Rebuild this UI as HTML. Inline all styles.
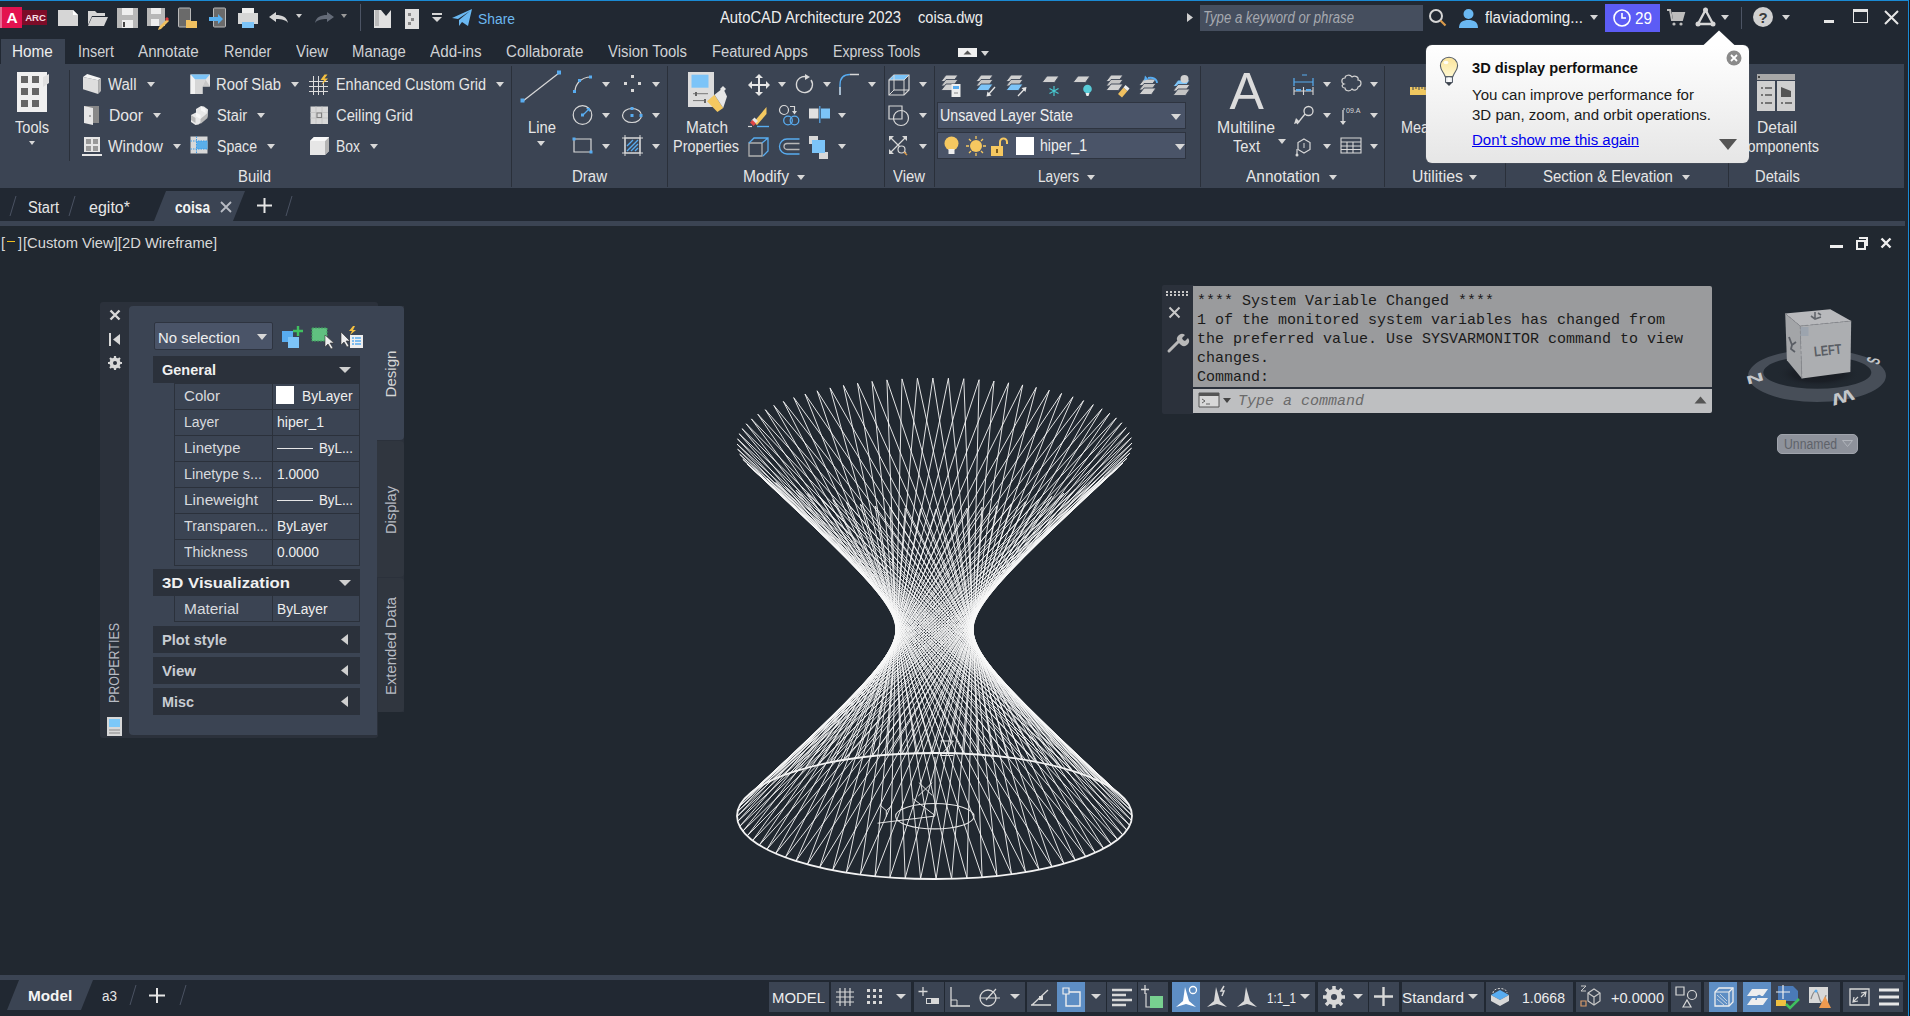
<!DOCTYPE html>
<html><head><meta charset="utf-8">
<style>
*{margin:0;padding:0;box-sizing:border-box}
html,body{width:1910px;height:1016px;overflow:hidden;background:#212830;font-family:"Liberation Sans",sans-serif;color:#e6e6e6}
.a{position:absolute}
.t{position:absolute;white-space:nowrap}
.dd{position:absolute;width:0;height:0;border-left-style:solid;border-right-style:solid;border-left-color:transparent;border-right-color:transparent}
svg{overflow:visible}
</style></head><body>

<div class="a" style="left:0px;top:0px;width:1910px;height:37px;background:#212832;"></div>
<div class="a" style="left:0px;top:37px;width:1910px;height:27px;background:#212832;"></div>
<div class="a" style="left:0px;top:64px;width:1904px;height:124px;background:#3b4453;"></div>
<div class="a" style="left:1px;top:39px;width:64px;height:25px;background:#3b4453;"></div>
<div class="a" style="left:0px;top:188px;width:1905px;height:33px;background:#212832;"></div>
<div class="a" style="left:0px;top:221px;width:1905px;height:5px;background:#3b4453;"></div>
<div class="a" style="left:0px;top:226px;width:1905px;height:749px;background:#212830;"></div>
<div class="a" style="left:0px;top:975px;width:1905px;height:5px;background:#3b4453;"></div>
<div class="a" style="left:0px;top:980px;width:1905px;height:36px;background:#212832;"></div>
<div class="a" style="left:0px;top:0px;width:1910px;height:1px;background:#1a8ad4;"></div>
<div class="a" style="left:1905px;top:1px;width:3px;height:1015px;background:#212832;"></div>
<div class="a" style="left:1908px;top:0px;width:1px;height:1016px;background:#1a8ad4;"></div>
<div class="a" style="left:1909px;top:0px;width:1px;height:1016px;background:#16191d;"></div>
<div class="a" style="left:0px;top:7px;width:2px;height:21px;background:#e86a92;"></div>
<div class="a" style="left:2px;top:7px;width:20px;height:21px;background:#e3124f;"></div>
<div class="t" style="left:6.5px;top:9.88px;font-size:15.5px;line-height:15.5px;color:#ffffff;font-family:'Liberation Sans',sans-serif;font-weight:bold;">A</div>
<div class="a" style="left:22px;top:10px;width:25px;height:15px;background:#7d0c28;"></div>
<div class="t" style="left:25.2px;top:12.87px;font-size:9.6px;line-height:9.6px;color:#f4dde3;font-family:'Liberation Sans',sans-serif;font-weight:bold;">ARC</div>
<svg class="a" style="left:57px;top:9px" width="22" height="18" viewBox="0 0 22 18"><path d="M1 1h15l5 5v11H1z" fill="#d6d6d6"/><path d="M16 1v5h5" fill="#ffffff"/></svg>
<svg class="a" style="left:87px;top:9px" width="22" height="18" viewBox="0 0 22 18"><path d="M1 2h7l2 2h8v3H5L1 16z" fill="#d6d6d6"/><path d="M5 8h16l-4 9H1z" fill="#d6d6d6"/></svg>
<svg class="a" style="left:117px;top:7px" width="22" height="22" viewBox="0 0 22 22"><path d="M0 1h21v20H0z" fill="#b8b8b8"/><path d="M5 1h11v7H5z" fill="#eeeeee"/><path d="M5 13h11v8H5z" fill="#eeeeee"/><path d="M6 15h2v5H6z" fill="#444"/></svg>
<svg class="a" style="left:147px;top:7px" width="22" height="22" viewBox="0 0 22 22"><path d="M0 1h18v18H0z" fill="#b8b8b8"/><path d="M4 1h10v6H4z" fill="#eeeeee"/><path d="M4 12h8v7H4z" fill="#eeeeee"/><path d="M12 20l8-8 2 2-8 8-3 1z" fill="#f0c060"/><path d="M18 12l2-2 2 2-2 2z" fill="#e04040"/></svg>
<svg class="a" style="left:178px;top:7px" width="20" height="22" viewBox="0 0 20 22"><rect x="0.5" y="1" width="12" height="19" rx="1" fill="#6a6a6a" stroke="#b8b8b8"/><path d="M8 13h4l1 1h6v7H8z" fill="#f0c060"/></svg>
<svg class="a" style="left:208px;top:7px" width="20" height="22" viewBox="0 0 20 22"><rect x="5.5" y="1" width="12" height="19" rx="1" fill="#6a6a6a" stroke="#b8b8b8"/><path d="M1 10h9v-3l5 5-5 5v-3H1z" fill="#58b0f0"/></svg>
<svg class="a" style="left:237px;top:7px" width="22" height="22" viewBox="0 0 22 22"><path d="M5 1h12v5H5z" fill="#eeeeee"/><path d="M1 6h20v11H1z" fill="#d6d6d6"/><path d="M5 15h12v6H5z" fill="#7cc4f8"/></svg>
<svg class="a" style="left:268px;top:11px" width="22" height="14" viewBox="0 0 22 14"><path d="M1 6l7-5v3c6 0 11 2 12 8-2-3-6-4-12-4v3z" fill="#d6d6d6"/></svg>
<div class="dd" style="left:296.0px;top:14px;border-left-width:3.5px;border-right-width:3.5px;border-top:4px solid #cfcfcf"></div>
<svg class="a" style="left:313px;top:11px" width="22" height="14" viewBox="0 0 22 14"><path d="M21 6l-7-5v3c-6 0-11 2-12 8 2-3 6-4 12-4v3z" fill="#646b78"/></svg>
<div class="dd" style="left:341.0px;top:14px;border-left-width:3.5px;border-right-width:3.5px;border-top:4px solid #9a9a9a"></div>
<div class="a" style="left:360px;top:4px;width:1px;height:27px;background:#4c5464;"></div>
<svg class="a" style="left:373px;top:9px" width="20" height="19" viewBox="0 0 20 19"><path d="M1 1l7 0 5 6 5-6v18H1z" fill="#e0e0e0"/><path d="M2 1h4v16H2z" fill="#bbb"/></svg>
<svg class="a" style="left:404px;top:8px" width="16" height="21" viewBox="0 0 16 21"><path d="M1 1h14v20H1z" fill="#e0e0e0"/><path d="M4 5h3v3H4zM7 10h3v3H7zM4 14h3v3H4z" fill="#888"/></svg>
<div class="a" style="left:432px;top:13px;width:10px;height:2px;background:#d6d6d6;"></div>
<div class="dd" style="left:432.0px;top:17px;border-left-width:5.0px;border-right-width:5.0px;border-top:5px solid #d6d6d6"></div>
<svg class="a" style="left:452px;top:9px" width="21" height="18" viewBox="0 0 21 18"><path d="M0 9L20 0l-4 17-6-4-3 4 0-6 11-9-12 8z" fill="#6ab8f2"/></svg>
<div class="t" style="left:478px;top:11.26px;font-size:15.4px;line-height:15.4px;color:#6cb8f0;font-family:'Liberation Sans',sans-serif;transform:scaleX(0.9004);transform-origin:0 0;">Share</div>
<div class="t" style="left:720px;top:9.99px;font-size:15.6px;line-height:15.6px;color:#eeeeee;font-family:'Liberation Sans',sans-serif;transform:scaleX(0.9488);transform-origin:0 0;">AutoCAD Architecture 2023</div>
<div class="t" style="left:918px;top:9.99px;font-size:15.6px;line-height:15.6px;color:#eeeeee;font-family:'Liberation Sans',sans-serif;transform:scaleX(0.9371);transform-origin:0 0;">coisa.dwg</div>
<svg class="a" style="left:1186px;top:12px" width="8" height="11" viewBox="0 0 8 11"><path d="M1 1l6 4.5-6 4.5z" fill="#d0d0d0"/></svg>
<div class="a" style="left:1200px;top:5px;width:223px;height:26px;background:#454e5e;"></div>
<div class="t" style="left:1203px;top:9.79px;font-size:15.6px;line-height:15.6px;color:#a6a9b0;font-family:'Liberation Sans',sans-serif;transform:scaleX(0.8427);transform-origin:0 0;font-style:italic;">Type a keyword or phrase</div>
<svg class="a" style="left:1428px;top:8px" width="20" height="20" viewBox="0 0 20 20"><circle cx="8" cy="8" r="6" fill="none" stroke="#d6d6d6" stroke-width="2"/><path d="M12.5 12.5l5 5" stroke="#d99a4a" stroke-width="2.2"/></svg>
<svg class="a" style="left:1458px;top:8px" width="21" height="20" viewBox="0 0 21 20"><circle cx="10.5" cy="6" r="5" fill="#6ab8f2"/><path d="M1 20c0-6 4-8 9.5-8s9.5 2 9.5 8z" fill="#6ab8f2"/></svg>
<div class="t" style="left:1485px;top:10.29px;font-size:15.6px;line-height:15.6px;color:#eeeeee;font-family:'Liberation Sans',sans-serif;transform:scaleX(0.9744);transform-origin:0 0;">flaviadoming...</div>
<div class="dd" style="left:1590.0px;top:15px;border-left-width:4.0px;border-right-width:4.0px;border-top:5px solid #d6d6d6"></div>
<div class="a" style="left:1605px;top:4px;width:55px;height:28px;background:#5c5cf5;"></div>
<svg class="a" style="left:1612px;top:8px" width="20" height="20" viewBox="0 0 20 20"><circle cx="10" cy="10" r="8" fill="none" stroke="#ffffff" stroke-width="1.6"/><path d="M10 5v5h4" fill="none" stroke="#ffffff" stroke-width="1.6"/></svg>
<div class="t" style="left:1635px;top:10.79px;font-size:15.6px;line-height:15.6px;color:#ffffff;font-family:'Liberation Sans',sans-serif;transform:scaleX(0.9798);transform-origin:0 0;">29</div>
<svg class="a" style="left:1667px;top:9px" width="18" height="18" viewBox="0 0 18 18"><path d="M0 1h3l2 10h10l2-7H5" fill="none" stroke="#bdbdbd" stroke-width="2"/><circle cx="7" cy="15" r="1.6" fill="#bdbdbd"/><circle cx="14" cy="15" r="1.6" fill="#bdbdbd"/><path d="M5 5h12l-2 6H6z" fill="#bdbdbd"/></svg>
<svg class="a" style="left:1695px;top:7px" width="21" height="20" viewBox="0 0 21 20"><path d="M10.5 3L3 17h15z" fill="none" stroke="#d6d6d6" stroke-width="2.4"/><circle cx="10.5" cy="3" r="2.5" fill="#d6d6d6"/><circle cx="3" cy="17" r="2.5" fill="#d6d6d6"/><circle cx="18" cy="17" r="2.5" fill="#d6d6d6"/></svg>
<div class="dd" style="left:1721.0px;top:15px;border-left-width:4.0px;border-right-width:4.0px;border-top:5px solid #d6d6d6"></div>
<div class="a" style="left:1741px;top:7px;width:1px;height:22px;background:#4c5464;"></div>
<svg class="a" style="left:1753px;top:7px" width="21" height="21" viewBox="0 0 21 21"><circle cx="10" cy="10" r="10" fill="#d0d0d0"/><text x="10" y="15.5" font-family="Liberation Sans" font-size="15" text-anchor="middle" fill="#3a3a3a" font-weight="bold">?</text></svg>
<div class="dd" style="left:1782.0px;top:15px;border-left-width:4.0px;border-right-width:4.0px;border-top:5px solid #d6d6d6"></div>
<div class="a" style="left:1824px;top:20px;width:10px;height:3px;background:#e6e6e6;"></div>
<div class="a" style="left:1853px;top:9px;width:15px;height:14px;background:transparent;border:1.5px solid #e6e6e6;border-top-width:3px"></div>
<svg class="a" style="left:1884px;top:10px" width="15" height="15" viewBox="0 0 15 15"><path d="M1 1l13 13M14 1L1 14" stroke="#e6e6e6" stroke-width="2"/></svg>
<div class="t" style="left:12.3px;top:43.99px;font-size:15.6px;line-height:15.6px;color:#eeeeee;font-family:'Liberation Sans',sans-serif;transform:scaleX(0.9805);transform-origin:0 0;">Home</div>
<div class="t" style="left:78px;top:43.99px;font-size:15.6px;line-height:15.6px;color:#cfd1d5;font-family:'Liberation Sans',sans-serif;transform:scaleX(0.9202);transform-origin:0 0;">Insert</div>
<div class="t" style="left:138.2px;top:43.99px;font-size:15.6px;line-height:15.6px;color:#cfd1d5;font-family:'Liberation Sans',sans-serif;transform:scaleX(0.9736);transform-origin:0 0;">Annotate</div>
<div class="t" style="left:223.8px;top:43.99px;font-size:15.6px;line-height:15.6px;color:#cfd1d5;font-family:'Liberation Sans',sans-serif;transform:scaleX(0.9226);transform-origin:0 0;">Render</div>
<div class="t" style="left:295.8px;top:43.99px;font-size:15.6px;line-height:15.6px;color:#cfd1d5;font-family:'Liberation Sans',sans-serif;transform:scaleX(0.9603);transform-origin:0 0;">View</div>
<div class="t" style="left:352px;top:43.99px;font-size:15.6px;line-height:15.6px;color:#cfd1d5;font-family:'Liberation Sans',sans-serif;transform:scaleX(0.9544);transform-origin:0 0;">Manage</div>
<div class="t" style="left:430px;top:43.99px;font-size:15.6px;line-height:15.6px;color:#cfd1d5;font-family:'Liberation Sans',sans-serif;transform:scaleX(0.9775);transform-origin:0 0;">Add-ins</div>
<div class="t" style="left:506px;top:43.99px;font-size:15.6px;line-height:15.6px;color:#cfd1d5;font-family:'Liberation Sans',sans-serif;transform:scaleX(0.9715);transform-origin:0 0;">Collaborate</div>
<div class="t" style="left:608px;top:43.99px;font-size:15.6px;line-height:15.6px;color:#cfd1d5;font-family:'Liberation Sans',sans-serif;transform:scaleX(0.9556);transform-origin:0 0;">Vision Tools</div>
<div class="t" style="left:712px;top:43.99px;font-size:15.6px;line-height:15.6px;color:#cfd1d5;font-family:'Liberation Sans',sans-serif;transform:scaleX(0.9442);transform-origin:0 0;">Featured Apps</div>
<div class="t" style="left:832.6px;top:43.99px;font-size:15.6px;line-height:15.6px;color:#cfd1d5;font-family:'Liberation Sans',sans-serif;transform:scaleX(0.9027);transform-origin:0 0;">Express Tools</div>
<div class="a" style="left:958px;top:48px;width:19px;height:9px;background:#f0f0f0;"></div>
<svg class="a" style="left:963px;top:50px" width="9" height="5" viewBox="0 0 9 5"><path d="M0.5 4.5l4-4 4 4z" fill="#555"/></svg>
<div class="dd" style="left:981.0px;top:51px;border-left-width:4.0px;border-right-width:4.0px;border-top:5px solid #d6d6d6"></div>
<div class="a" style="left:511px;top:66px;width:1px;height:121px;background:#2a303a;"></div>
<div class="a" style="left:667px;top:66px;width:1px;height:121px;background:#2a303a;"></div>
<div class="a" style="left:884px;top:66px;width:1px;height:121px;background:#2a303a;"></div>
<div class="a" style="left:934px;top:66px;width:1px;height:121px;background:#2a303a;"></div>
<div class="a" style="left:1200px;top:66px;width:1px;height:121px;background:#2a303a;"></div>
<div class="a" style="left:1384px;top:66px;width:1px;height:121px;background:#2a303a;"></div>
<div class="a" style="left:1505px;top:66px;width:1px;height:121px;background:#2a303a;"></div>
<div class="a" style="left:1728px;top:66px;width:1px;height:121px;background:#2a303a;"></div>
<div class="a" style="left:69px;top:70px;width:1px;height:91px;background:#2a303a;"></div>
<svg class="a" style="left:16px;top:71px" width="34" height="42" viewBox="0 0 34 42"><path d="M1 1h26l4 0v40H1z" fill="#f0f0f0"/><path d="M27 6l6-3v9l-6 4z" fill="#e0e0e0"/><path d="M5 5h7v7H5zM16 5h7v7h-7zM5 17h7v7H5zM16 17h7v7h-7zM5 29h7v7H5zM16 29h7v7h-7z" fill="#666"/></svg>
<div class="t" style="left:15px;top:120.09px;font-size:15.6px;line-height:15.6px;color:#e6e6e6;font-family:'Liberation Sans',sans-serif;transform:scaleX(0.9336);transform-origin:0 0;">Tools</div>
<div class="dd" style="left:28.700000000000003px;top:141px;border-left-width:3.5px;border-right-width:3.5px;border-top:4px solid #d8d8d8"></div>
<svg class="a" style="left:80px;top:72px" width="24" height="24" viewBox="0 0 24 24"><path d="M3 4.9L18.1 8.2V21.9L3 17.2z" fill="#dedede"/><path d="M3 4.9L7.2 2 21 6.3 18.1 8.2z" fill="#f4f4f4"/><path d="M18.1 8.2L21 6.3V19L18.1 21.9z" fill="#b4b4b4"/></svg>
<div class="t" style="left:108px;top:76.79px;font-size:15.6px;line-height:15.6px;color:#e6e6e6;font-family:'Liberation Sans',sans-serif;transform:scaleX(0.9578);transform-origin:0 0;">Wall</div>
<div class="dd" style="left:147.0px;top:81.5px;border-left-width:4.0px;border-right-width:4.0px;border-top:5px solid #d8d8d8"></div>
<svg class="a" style="left:83px;top:105px" width="17" height="21" viewBox="0 0 17 21"><path d="M1 1h15v17H1z" fill="#888"/><path d="M1 1l9 2v17l-9-2z" fill="#e6e6e6"/><circle cx="7" cy="11" r="0.8" fill="#555"/></svg>
<div class="t" style="left:109px;top:107.79px;font-size:15.6px;line-height:15.6px;color:#e6e6e6;font-family:'Liberation Sans',sans-serif;transform:scaleX(1.0056);transform-origin:0 0;">Door</div>
<div class="dd" style="left:153.0px;top:112.5px;border-left-width:4.0px;border-right-width:4.0px;border-top:5px solid #d8d8d8"></div>
<svg class="a" style="left:82px;top:136px" width="21" height="22" viewBox="0 0 21 22"><path d="M2 1h16v15H2z" fill="#e6e6e6"/><path d="M4 3h5v5H4zM11 3h5v5h-5zM4 10h5v5H4zM11 10h5v5h-5z" fill="#999"/><path d="M0 18h20v2H0z" fill="#e6e6e6"/></svg>
<div class="t" style="left:108px;top:138.79px;font-size:15.6px;line-height:15.6px;color:#e6e6e6;font-family:'Liberation Sans',sans-serif;transform:scaleX(0.9913);transform-origin:0 0;">Window</div>
<div class="dd" style="left:173.0px;top:143.5px;border-left-width:4.0px;border-right-width:4.0px;border-top:5px solid #d8d8d8"></div>
<svg class="a" style="left:190px;top:74px" width="21" height="21" viewBox="0 0 21 21"><path d="M0.5 0.5h19.5v12h-7.5v7.5H0.5z" fill="#e4e4e4"/><path d="M0.5 0.5h19.5l-4.5 5H5z" fill="#7cc4f8"/><path d="M15.5 5.5l4.5 7h-7.5z" fill="#c8c8c8"/><path d="M0.5 0.5L5 5.5v14.5H0.5z" fill="#f2f2f2"/><path d="M5 5.5h10.5l-3 7v7.5H5z" fill="#d6d6d6"/></svg>
<div class="t" style="left:216px;top:76.79px;font-size:15.6px;line-height:15.6px;color:#e6e6e6;font-family:'Liberation Sans',sans-serif;transform:scaleX(0.9488);transform-origin:0 0;">Roof Slab</div>
<div class="dd" style="left:291.0px;top:81.5px;border-left-width:4.0px;border-right-width:4.0px;border-top:5px solid #d8d8d8"></div>
<svg class="a" style="left:190px;top:105px" width="19" height="20" viewBox="0 0 19 20"><path d="M1 10l5-2.5 0-3.5 5-3 3 0.5 4 3 -0.5 7-5 5-4 3-3 .5-4.5-3z" fill="#e8e8e8"/><path d="M6 7.5l4.5 2.5v4l-4.5-2.5zM11 1.5l4.5 2.5v4l-4.5-2.5z" fill="#f6f6f6"/><path d="M1 10l0 5 4.5 3v-5zM10.5 14v5l7-6v-5z" fill="#b8b8b8"/></svg>
<div class="t" style="left:217px;top:107.79px;font-size:15.6px;line-height:15.6px;color:#e6e6e6;font-family:'Liberation Sans',sans-serif;transform:scaleX(0.9353);transform-origin:0 0;">Stair</div>
<div class="dd" style="left:257.0px;top:112.5px;border-left-width:4.0px;border-right-width:4.0px;border-top:5px solid #d8d8d8"></div>
<svg class="a" style="left:190px;top:136px" width="18" height="19" viewBox="0 0 18 19"><path d="M0.5 0.5h17v17H0.5z" fill="#d8d8d8"/><path d="M6.5 5h11v8h-11z" fill="#5aaeea"/><path d="M0.5 5h17M0.5 13h17M6.5 0.5v17" stroke="#3a9ae8" stroke-width="1" stroke-dasharray="1.5 1" fill="none"/></svg>
<div class="t" style="left:217px;top:138.79px;font-size:15.6px;line-height:15.6px;color:#e6e6e6;font-family:'Liberation Sans',sans-serif;transform:scaleX(0.9043);transform-origin:0 0;">Space</div>
<div class="dd" style="left:267.0px;top:143.5px;border-left-width:4.0px;border-right-width:4.0px;border-top:5px solid #d8d8d8"></div>
<svg class="a" style="left:309px;top:74px" width="21" height="21" viewBox="0 0 21 21"><path d="M4.5 2v19M9.5 2v19M14.5 8v13M0 7.5h19M0 12.5h19M0 17.5h19" stroke="#dcdcdc" stroke-width="1" fill="none"/><path d="M15.5 0.5l-4 5.5h3.5l-2.5 5 6.5-6.5h-3.5l3-4z" fill="#f4c040"/></svg>
<div class="t" style="left:336px;top:76.79px;font-size:15.6px;line-height:15.6px;color:#e6e6e6;font-family:'Liberation Sans',sans-serif;transform:scaleX(0.9251);transform-origin:0 0;">Enhanced Custom Grid</div>
<div class="dd" style="left:496.0px;top:81.5px;border-left-width:4.0px;border-right-width:4.0px;border-top:5px solid #d8d8d8"></div>
<svg class="a" style="left:310px;top:106px" width="19" height="19" viewBox="0 0 19 19"><path d="M0.5 0.5h17.5v17.5H0.5z" fill="#d8d8d8"/><path d="M0.5 6.5h17.5M0.5 12h17.5M6 0.5v17.5M12 0.5v17.5" stroke="#c4c4c4" stroke-width="1"/><path d="M7 7h4.5v4.5H7z" fill="none" stroke="#808080" stroke-width="1.1"/></svg>
<div class="t" style="left:336px;top:107.79px;font-size:15.6px;line-height:15.6px;color:#e6e6e6;font-family:'Liberation Sans',sans-serif;transform:scaleX(0.9449);transform-origin:0 0;">Ceiling Grid</div>
<svg class="a" style="left:309px;top:136px" width="21" height="20" viewBox="0 0 21 20"><path d="M1 5l4-4h15v14l-4 4H1z" fill="#e6e6e6"/><path d="M16 5l4-4v14l-4 4z" fill="#b4b4b4"/><path d="M1 5l4-4h15l-4 4z" fill="#f8f8f8"/></svg>
<div class="t" style="left:336px;top:138.79px;font-size:15.6px;line-height:15.6px;color:#e6e6e6;font-family:'Liberation Sans',sans-serif;transform:scaleX(0.8928);transform-origin:0 0;">Box</div>
<div class="dd" style="left:370.0px;top:143.5px;border-left-width:4.0px;border-right-width:4.0px;border-top:5px solid #d8d8d8"></div>
<div class="t" style="left:238px;top:168.79px;font-size:15.6px;line-height:15.6px;color:#e6e6e6;font-family:'Liberation Sans',sans-serif;transform:scaleX(0.9513);transform-origin:0 0;">Build</div>
<svg class="a" style="left:520px;top:70px" width="42" height="34" viewBox="0 0 42 34"><path d="M3 31L39 3" stroke="#d8d8d8" stroke-width="1.2"/><rect x="0.5" y="28.5" width="4" height="4" fill="#58acf0"/><rect x="37" y="0.5" width="4" height="4" fill="#58acf0"/></svg>
<div class="t" style="left:528px;top:119.79px;font-size:15.6px;line-height:15.6px;color:#e6e6e6;font-family:'Liberation Sans',sans-serif;transform:scaleX(0.9494);transform-origin:0 0;">Line</div>
<div class="dd" style="left:537.0px;top:141px;border-left-width:4.0px;border-right-width:4.0px;border-top:5px solid #d8d8d8"></div>
<svg class="a" style="left:572px;top:74px" width="22" height="20" viewBox="0 0 22 20"><path d="M3 18c0-8 6-15 16-15" fill="none" stroke="#d8d8d8" stroke-width="1.2"/><rect x="1" y="16" width="3" height="3" fill="#58acf0"/><rect x="6" y="5" width="3" height="3" fill="#58acf0"/><rect x="17" y="1.5" width="3" height="3" fill="#58acf0"/></svg>
<div class="dd" style="left:602.0px;top:81.5px;border-left-width:4.0px;border-right-width:4.0px;border-top:5px solid #d8d8d8"></div>
<svg class="a" style="left:623px;top:74px" width="20" height="20" viewBox="0 0 20 20"><path d="M8 1h3v3H8zM1 8h3v3H1zM15 8h3v3h-3zM8 15h3v3H8z" fill="#d8d8d8"/></svg>
<div class="dd" style="left:652.0px;top:81.5px;border-left-width:4.0px;border-right-width:4.0px;border-top:5px solid #d8d8d8"></div>
<svg class="a" style="left:572px;top:104px" width="22" height="22" viewBox="0 0 22 22"><circle cx="10.5" cy="11" r="9.3" fill="none" stroke="#d8d8d8" stroke-width="1.2"/><rect x="9" y="9.5" width="3" height="3" fill="#58acf0"/><path d="M11 11l6-6" stroke="#58acf0" stroke-width="1.2"/><path d="M14 4h4v4z" fill="#58acf0"/></svg>
<div class="dd" style="left:602.0px;top:112.5px;border-left-width:4.0px;border-right-width:4.0px;border-top:5px solid #d8d8d8"></div>
<svg class="a" style="left:621px;top:106px" width="23" height="18" viewBox="0 0 23 18"><ellipse cx="11" cy="9.5" rx="9.5" ry="7" fill="none" stroke="#d8d8d8" stroke-width="1.2"/><rect x="9.5" y="1" width="3" height="3" fill="#58acf0"/><rect x="9.5" y="8" width="3" height="3" fill="#58acf0"/><rect x="18.5" y="8" width="3" height="3" fill="#58acf0"/></svg>
<div class="dd" style="left:652.0px;top:112.5px;border-left-width:4.0px;border-right-width:4.0px;border-top:5px solid #d8d8d8"></div>
<svg class="a" style="left:572px;top:137px" width="22" height="18" viewBox="0 0 22 18"><path d="M2 2h17v13H2z" fill="none" stroke="#d8d8d8" stroke-width="1.2"/><rect x="0.5" y="0.5" width="3" height="3" fill="#58acf0"/><rect x="17.5" y="13.5" width="3" height="3" fill="#58acf0"/></svg>
<div class="dd" style="left:602.0px;top:143.5px;border-left-width:4.0px;border-right-width:4.0px;border-top:5px solid #d8d8d8"></div>
<svg class="a" style="left:622px;top:135px" width="22" height="22" viewBox="0 0 22 22"><path d="M3 3h15v15H3z" fill="none" stroke="#d8d8d8" stroke-width="1.2"/><path d="M3 0v21M18 0v21M0 3h21M0 18h21" stroke="#d8d8d8" stroke-width="1"/><path d="M5 11l6-6M5 16l11-11M9 16l7-7M13 16l3-3" stroke="#58acf0" stroke-width="1.4"/></svg>
<div class="dd" style="left:652.0px;top:143.5px;border-left-width:4.0px;border-right-width:4.0px;border-top:5px solid #d8d8d8"></div>
<div class="t" style="left:572px;top:168.79px;font-size:15.6px;line-height:15.6px;color:#e6e6e6;font-family:'Liberation Sans',sans-serif;transform:scaleX(0.9615);transform-origin:0 0;">Draw</div>
<svg class="a" style="left:686px;top:70px" width="44" height="44" viewBox="0 0 44 44"><path d="M2 2h26v35H2z" fill="#dcdcdc"/><path d="M5.5 4.7h17v13h-17z" fill="#7cc4f8"/><path d="M7 23.7h15M7 30.6h12" stroke="#777" stroke-width="1"/><path d="M9 22h2v4H9zM18 29h2v4h-2z" fill="#666"/><path d="M21 31.2l7.5-6.4 8.7 13.3-5.8 4z" fill="#f4c860"/><path d="M28.5 24.8l8.5-6.8 4 8.6-3.8 11.5z" fill="#e6e6e6"/><path d="M34 19l3-3 3 3-3 3z" fill="#e6e6e6"/></svg>
<div class="t" style="left:686px;top:119.79px;font-size:15.6px;line-height:15.6px;color:#e6e6e6;font-family:'Liberation Sans',sans-serif;transform:scaleX(0.9887);transform-origin:0 0;">Match</div>
<div class="t" style="left:673px;top:138.79px;font-size:15.6px;line-height:15.6px;color:#e6e6e6;font-family:'Liberation Sans',sans-serif;transform:scaleX(0.9283);transform-origin:0 0;">Properties</div>
<svg class="a" style="left:748px;top:74px" width="22" height="22" viewBox="0 0 22 22"><path d="M11 1v20M1 11h20" stroke="#e6e6e6" stroke-width="2"/><path d="M11 0l-4 4h8zM11 22l-4-4h8zM0 11l4-4v8zM22 11l-4-4v8z" fill="#e6e6e6"/></svg>
<div class="dd" style="left:778.0px;top:81.5px;border-left-width:4.0px;border-right-width:4.0px;border-top:5px solid #d8d8d8"></div>
<svg class="a" style="left:794px;top:74px" width="22" height="22" viewBox="0 0 22 22"><path d="M17 6a8 8 0 1 1-4-3" fill="none" stroke="#d8d8d8" stroke-width="1.4"/><path d="M11 0l5 3-5 3z" fill="#d8d8d8"/></svg>
<div class="dd" style="left:823.0px;top:81.5px;border-left-width:4.0px;border-right-width:4.0px;border-top:5px solid #d8d8d8"></div>
<svg class="a" style="left:838px;top:73px" width="22" height="22" viewBox="0 0 22 22"><path d="M2 22V12C2 5 6 1.5 12 1.5" fill="none" stroke="#58acf0" stroke-width="1.3"/><path d="M2 22V14M12 1.5h9" fill="none" stroke="#d8d8d8" stroke-width="1.3"/></svg>
<div class="dd" style="left:868.0px;top:81.5px;border-left-width:4.0px;border-right-width:4.0px;border-top:5px solid #d8d8d8"></div>
<svg class="a" style="left:748px;top:104px" width="22" height="22" viewBox="0 0 22 22"><path d="M5.5 18.5L18.5 3v7L9 21z" fill="#f4c860"/><path d="M3.5 16.5l3-3 3.5 3.5-3 3z" fill="#e6e6e6"/><path d="M2 18.5l2.5-2.5 3.5 3.5-2.5 2.5z" fill="#e04545"/><path d="M0 22.5h4" stroke="#d8d8d8" stroke-width="1.2"/><path d="M9 22.5h12" stroke="#58acf0" stroke-width="1.4"/></svg>
<svg class="a" style="left:778px;top:104px" width="22" height="22" viewBox="0 0 22 22"><circle cx="6" cy="6" r="4.5" fill="none" stroke="#d8d8d8" stroke-width="1.2"/><circle cx="10" cy="16.5" r="4.3" fill="none" stroke="#58acf0" stroke-width="1.3"/><circle cx="16.5" cy="16.5" r="4.3" fill="none" stroke="#58acf0" stroke-width="1.3"/><path d="M12 2.5h4.5v6" fill="none" stroke="#d8d8d8" stroke-width="1.2"/><path d="M14 7l2.5 3.5 2.5-3.5z" fill="#d8d8d8"/></svg>
<svg class="a" style="left:808px;top:106px" width="24" height="18" viewBox="0 0 24 18"><path d="M1 2.5h9.5v10H1z" fill="#e0e0e0"/><path d="M13 2.5h9v10h-9z" fill="#7cc4f8"/><path d="M11.8 0v17" stroke="#58acf0" stroke-width="1.2"/></svg>
<div class="dd" style="left:838.0px;top:112.5px;border-left-width:4.0px;border-right-width:4.0px;border-top:5px solid #d8d8d8"></div>
<svg class="a" style="left:748px;top:136px" width="22" height="22" viewBox="0 0 22 22"><path d="M1 7h13v13H1z" fill="none" stroke="#b0b0b0" stroke-width="1.3"/><path d="M1 7l5-5h14v13l-5 5M14 7l6-5" fill="none" stroke="#58acf0" stroke-width="1.3"/></svg>
<svg class="a" style="left:778px;top:137px" width="24" height="20" viewBox="0 0 24 20"><path d="M21.5 2H9a7.5 7.5 0 0 0 0 15h12.5" fill="none" stroke="#58acf0" stroke-width="1.3"/><path d="M21.5 6.5H9a3 3 0 0 0 0 6h12.5" fill="none" stroke="#b8b8b8" stroke-width="1.3"/></svg>
<svg class="a" style="left:808px;top:135px" width="24" height="24" viewBox="0 0 24 24"><path d="M1 1h9v8H1z" fill="#d8d8d8"/><path d="M11 17h9v7h-9z" fill="#d8d8d8"/><path d="M4 5h13v13H4z" fill="#7cc4f8"/></svg>
<div class="dd" style="left:838.0px;top:143.5px;border-left-width:4.0px;border-right-width:4.0px;border-top:5px solid #d8d8d8"></div>
<div class="t" style="left:743px;top:168.79px;font-size:15.6px;line-height:15.6px;color:#e6e6e6;font-family:'Liberation Sans',sans-serif;">Modify</div>
<div class="dd" style="left:797.0px;top:174.5px;border-left-width:4.0px;border-right-width:4.0px;border-top:5px solid #d8d8d8"></div>
<svg class="a" style="left:888px;top:74px" width="22" height="22" viewBox="0 0 22 22"><path d="M1 6l5-5h15v15l-5 5H1z" fill="none" stroke="#d8d8d8" stroke-width="1.2"/><path d="M1 6l5-5h15l-5 5z" fill="#7cc4f8"/><path d="M1 6h15v15M16 6l5-5M1 21l5-5h15M6 1v15" fill="none" stroke="#d8d8d8" stroke-width="1"/></svg>
<div class="dd" style="left:919.0px;top:81.5px;border-left-width:4.0px;border-right-width:4.0px;border-top:5px solid #d8d8d8"></div>
<svg class="a" style="left:888px;top:105px" width="22" height="22" viewBox="0 0 22 22"><path d="M1 1h13v13H1z" fill="none" stroke="#d8d8d8" stroke-width="1.2"/><circle cx="13" cy="13" r="7.5" fill="none" stroke="#d8d8d8" stroke-width="1.2"/></svg>
<div class="dd" style="left:919.0px;top:112.5px;border-left-width:4.0px;border-right-width:4.0px;border-top:5px solid #d8d8d8"></div>
<svg class="a" style="left:888px;top:135px" width="22" height="22" viewBox="0 0 22 22"><path d="M2 2l16 16M18 2L2 18" stroke="#d8d8d8" stroke-width="1.2"/><path d="M1 1h5L1 6zM19 1h-5l5 5zM1 19v-5l5 5z" fill="#d8d8d8"/><circle cx="13.5" cy="14.5" r="3.5" fill="#3b4453" stroke="#d8d8d8" stroke-width="1.2"/><path d="M16 17l3 3" stroke="#d99a4a" stroke-width="1.5"/></svg>
<div class="dd" style="left:919.0px;top:143.5px;border-left-width:4.0px;border-right-width:4.0px;border-top:5px solid #d8d8d8"></div>
<div class="t" style="left:893px;top:168.79px;font-size:15.6px;line-height:15.6px;color:#e6e6e6;font-family:'Liberation Sans',sans-serif;transform:scaleX(0.9544);transform-origin:0 0;">View</div>
<svg class="a" style="left:941px;top:74px" width="24" height="24" viewBox="0 0 24 24"><path d="M5 1.0h12l-4.5 6.5H0z" fill="#d0d0d0" stroke="#3b4453" stroke-width="0.9"/><path d="M5 5.5h12l-4.5 6.5H0z" fill="#c4c4c4" stroke="#3b4453" stroke-width="0.9"/><path d="M5 10.0h12l-4.5 6.5H0z" fill="#d0d0d0" stroke="#3b4453" stroke-width="0.9"/><path d="M10.5 10h9v13h-9z" fill="#eeeeee"/><path d="M12 12h6v3h-6z" fill="#58acf0"/><path d="M13 19h4" stroke="#888"/></svg>
<svg class="a" style="left:976px;top:74px" width="24" height="24" viewBox="0 0 24 24"><path d="M5 1.0h12l-4.5 6.5H0z" fill="#d0d0d0" stroke="#3b4453" stroke-width="0.9"/><path d="M5 5.5h12l-4.5 6.5H0z" fill="#c4c4c4" stroke="#3b4453" stroke-width="0.9"/><path d="M5 10.0h12l-4.5 6.5H0z" fill="#7cc4f8" stroke="#3b4453" stroke-width="0.9"/><path d="M19 13l-7 8" stroke="#e6e6e6" stroke-width="1.3"/><path d="M10.5 22.5l1-5 4 4z" fill="#e6e6e6"/></svg>
<svg class="a" style="left:1006px;top:74px" width="24" height="24" viewBox="0 0 24 24"><path d="M5 1.0h12l-4.5 6.5H0z" fill="#d0d0d0" stroke="#3b4453" stroke-width="0.9"/><path d="M5 5.5h12l-4.5 6.5H0z" fill="#c4c4c4" stroke="#3b4453" stroke-width="0.9"/><path d="M5 10.0h12l-4.5 6.5H0z" fill="#7cc4f8" stroke="#3b4453" stroke-width="0.9"/><path d="M12 22l7-7.5" stroke="#e6e6e6" stroke-width="1.3"/><path d="M20.5 13l-1 5-4-4z" fill="#e6e6e6"/></svg>
<svg class="a" style="left:1040px;top:74px" width="24" height="24" viewBox="0 0 24 24"><path d="M7 2.0h12l-4.5 6.5H2z" fill="#d0d0d0" stroke="#3b4453" stroke-width="0.9"/><path d="M14 12v10M9.5 14.5l9 5M9.5 19.5l9-5" stroke="#48c8d0" stroke-width="1.2"/></svg>
<svg class="a" style="left:1071px;top:74px" width="24" height="24" viewBox="0 0 24 24"><path d="M7 2.0h12l-4.5 6.5H2z" fill="#d0d0d0" stroke="#3b4453" stroke-width="0.9"/><circle cx="16.5" cy="15" r="4.3" fill="#58ccd8"/><path d="M14.5 19h4l-1 3h-2z" fill="#eeeeee"/></svg>
<svg class="a" style="left:1106px;top:74px" width="24" height="24" viewBox="0 0 24 24"><path d="M5 1.0h12l-4.5 6.5H0z" fill="#d0d0d0" stroke="#3b4453" stroke-width="0.9"/><path d="M5 5.5h12l-4.5 6.5H0z" fill="#c4c4c4" stroke="#3b4453" stroke-width="0.9"/><path d="M5 10.0h12l-4.5 6.5H0z" fill="#d0d0d0" stroke="#3b4453" stroke-width="0.9"/><path d="M12 20l5.5-6.5 4 3.5-5.5 6.5z" fill="#f0c060"/><path d="M17.5 13.5l2-2.5 4 3.5-2 2.5z" fill="#eeeeee"/></svg>
<svg class="a" style="left:1137px;top:74px" width="24" height="24" viewBox="0 0 24 24"><path d="M7 5.0h12l-4.5 6.5H2z" fill="#d0d0d0" stroke="#3b4453" stroke-width="0.9"/><path d="M7 9.5h12l-4.5 6.5H2z" fill="#c4c4c4" stroke="#3b4453" stroke-width="0.9"/><path d="M7 14.0h12l-4.5 6.5H2z" fill="#d0d0d0" stroke="#3b4453" stroke-width="0.9"/><path d="M20 9c0-4-4-6-9-5" fill="none" stroke="#58acf0" stroke-width="1.8"/><path d="M8 1.5l-1 5 4.5-1z" fill="#58acf0"/></svg>
<svg class="a" style="left:1171px;top:74px" width="24" height="24" viewBox="0 0 24 24"><path d="M7 6.0h12l-4.5 6.5H2z" fill="#7cc4f8" stroke="#3b4453" stroke-width="0.9"/><path d="M7 10.5h12l-4.5 6.5H2z" fill="#d0d0d0" stroke="#3b4453" stroke-width="0.9"/><path d="M7 15.0h12l-4.5 6.5H2z" fill="#c4c4c4" stroke="#3b4453" stroke-width="0.9"/><circle cx="13.5" cy="5" r="4" fill="#d0d0d0"/></svg>
<div class="a" style="left:937px;top:102px;width:249px;height:27px;background:#4a5468;border:1px solid #2e3440"></div>
<div class="t" style="left:940px;top:107.79px;font-size:15.6px;line-height:15.6px;color:#eeeeee;font-family:'Liberation Sans',sans-serif;transform:scaleX(0.9130);transform-origin:0 0;">Unsaved Layer State</div>
<div class="dd" style="left:1171.0px;top:114px;border-left-width:5.5px;border-right-width:5.5px;border-top:6px solid #d8d8d8"></div>
<div class="a" style="left:937px;top:132px;width:249px;height:27px;background:#4a5468;border:1px solid #2e3440"></div>
<svg class="a" style="left:943px;top:136px" width="18" height="20" viewBox="0 0 18 20"><circle cx="8.5" cy="7.5" r="7" fill="#f6c860"/><path d="M5.5 13h6v5h-6z" fill="#eeeeee"/></svg>
<svg class="a" style="left:965px;top:135px" width="22" height="22" viewBox="0 0 22 22"><circle cx="11" cy="11" r="6" fill="#f6c860"/><path d="M11 1v3M11 18v3M1 11h3M18 11h3M4 4l2 2M16 16l2 2M4 18l2-2M16 6l2-2" stroke="#f6c860" stroke-width="1.3"/></svg>
<svg class="a" style="left:990px;top:137px" width="18" height="20" viewBox="0 0 18 20"><path d="M1 9h12v10H1z" fill="#f6c860"/><path d="M10 9V5a3.5 3.5 0 0 1 7 0v2" fill="none" stroke="#f6c860" stroke-width="2"/><path d="M6 12h2v4H6z" fill="#7a5a20"/></svg>
<div class="a" style="left:1016px;top:137px;width:18px;height:18px;background:#ffffff;"></div>
<div class="t" style="left:1040px;top:138.29px;font-size:15.6px;line-height:15.6px;color:#eeeeee;font-family:'Liberation Sans',sans-serif;transform:scaleX(0.9032);transform-origin:0 0;">hiper_1</div>
<div class="dd" style="left:1174.5px;top:144px;border-left-width:5.5px;border-right-width:5.5px;border-top:6px solid #d8d8d8"></div>
<div class="t" style="left:1038px;top:168.79px;font-size:15.6px;line-height:15.6px;color:#e6e6e6;font-family:'Liberation Sans',sans-serif;transform:scaleX(0.8757);transform-origin:0 0;">Layers</div>
<div class="dd" style="left:1087.0px;top:174.5px;border-left-width:4.0px;border-right-width:4.0px;border-top:5px solid #d8d8d8"></div>
<div class="t" style="left:1229.5px;top:66.41px;font-size:51.5px;line-height:51.5px;color:#dcdcdc;font-family:'Liberation Sans',sans-serif;">A</div>
<div class="t" style="left:1217px;top:119.79px;font-size:15.6px;line-height:15.6px;color:#e6e6e6;font-family:'Liberation Sans',sans-serif;transform:scaleX(1.0137);transform-origin:0 0;">Multiline</div>
<div class="t" style="left:1233px;top:138.79px;font-size:15.6px;line-height:15.6px;color:#e6e6e6;font-family:'Liberation Sans',sans-serif;transform:scaleX(0.9438);transform-origin:0 0;">Text</div>
<div class="dd" style="left:1278.0px;top:138.5px;border-left-width:4.0px;border-right-width:4.0px;border-top:5px solid #d8d8d8"></div>
<svg class="a" style="left:1293px;top:73px" width="22" height="22" viewBox="0 0 22 22"><path d="M1 5v8M20 5v8M1 9h19" stroke="#58acf0" stroke-width="1.2"/><path d="M9 2h5" stroke="#58acf0"/><path d="M1 14v8M10.5 14v8M20 14v8M1 18h19" stroke="#d8d8d8" stroke-width="1.1"/><path d="M3 17h5M13 17h5" stroke="#58acf0" stroke-width="2"/></svg>
<div class="dd" style="left:1323.0px;top:81.5px;border-left-width:4.0px;border-right-width:4.0px;border-top:5px solid #d8d8d8"></div>
<svg class="a" style="left:1340px;top:74px" width="22" height="20" viewBox="0 0 22 20"><path d="M4 10c-3-1-3-6 1-6 0-3 5-4 7-1 3-2 7 0 6 3 4 0 4 6 0 7 0 3-4 4-6 2-2 3-7 2-7-1-3 0-4-3-1-4z" fill="none" stroke="#d0d0d0" stroke-width="1.2"/></svg>
<div class="dd" style="left:1370.0px;top:81.5px;border-left-width:4.0px;border-right-width:4.0px;border-top:5px solid #d8d8d8"></div>
<svg class="a" style="left:1293px;top:105px" width="22" height="20" viewBox="0 0 22 20"><circle cx="15.5" cy="6" r="4.5" fill="none" stroke="#d8d8d8" stroke-width="1.3"/><path d="M12 9l-8 10" stroke="#d8d8d8" stroke-width="1.3"/><path d="M1 19l2-6 4 4z" fill="#d8d8d8"/></svg>
<div class="dd" style="left:1323.0px;top:112.5px;border-left-width:4.0px;border-right-width:4.0px;border-top:5px solid #d8d8d8"></div>
<svg class="a" style="left:1340px;top:104px" width="24" height="22" viewBox="0 0 24 22"><path d="M3 6v14" stroke="#d8d8d8" stroke-width="1.3"/><path d="M0 17l3 4 3-4z" fill="#d8d8d8"/><path d="M3 5h2" stroke="#d8d8d8"/><text x="6" y="9" font-family="Liberation Sans" font-size="7" fill="#d8d8d8">09.A</text></svg>
<div class="dd" style="left:1370.0px;top:112.5px;border-left-width:4.0px;border-right-width:4.0px;border-top:5px solid #d8d8d8"></div>
<svg class="a" style="left:1294px;top:137px" width="22" height="20" viewBox="0 0 22 20"><path d="M10 2l6 3.5v7L10 16l-6-3.5v-7z" fill="none" stroke="#d8d8d8" stroke-width="1.2"/><path d="M3 12v6" stroke="#d8d8d8" stroke-width="1.2"/><circle cx="3" cy="18" r="1.5" fill="#d8d8d8"/><path d="M10 6v5" stroke="#d8d8d8"/></svg>
<div class="dd" style="left:1323.0px;top:143.5px;border-left-width:4.0px;border-right-width:4.0px;border-top:5px solid #d8d8d8"></div>
<svg class="a" style="left:1340px;top:137px" width="22" height="18" viewBox="0 0 22 18"><path d="M1 1h20v15H1zM1 5h20M1 9h20M1 12.5h20M7 5v11M13 5v11" fill="none" stroke="#d8d8d8" stroke-width="1.1"/></svg>
<div class="dd" style="left:1370.0px;top:143.5px;border-left-width:4.0px;border-right-width:4.0px;border-top:5px solid #d8d8d8"></div>
<div class="t" style="left:1246px;top:168.79px;font-size:15.6px;line-height:15.6px;color:#e6e6e6;font-family:'Liberation Sans',sans-serif;transform:scaleX(0.9921);transform-origin:0 0;">Annotation</div>
<div class="dd" style="left:1329.0px;top:174.5px;border-left-width:4.0px;border-right-width:4.0px;border-top:5px solid #d8d8d8"></div>
<svg class="a" style="left:1410px;top:86px" width="20" height="10" viewBox="0 0 20 10"><path d="M0 1h20v8H0z" fill="#f0c860"/><path d="M3 1v3M6 1v2M9 1v3M12 1v2M15 1v3" stroke="#3b4453" stroke-width="1"/></svg>
<div class="t" style="left:1401px;top:119.79px;font-size:15.6px;line-height:15.6px;color:#e6e6e6;font-family:'Liberation Sans',sans-serif;transform:scaleX(0.9227);transform-origin:0 0;">Measure</div>
<div class="t" style="left:1412px;top:168.79px;font-size:15.6px;line-height:15.6px;color:#e6e6e6;font-family:'Liberation Sans',sans-serif;transform:scaleX(1.0145);transform-origin:0 0;">Utilities</div>
<div class="dd" style="left:1469.0px;top:174.5px;border-left-width:4.0px;border-right-width:4.0px;border-top:5px solid #d8d8d8"></div>
<div class="t" style="left:1543px;top:168.79px;font-size:15.6px;line-height:15.6px;color:#e6e6e6;font-family:'Liberation Sans',sans-serif;transform:scaleX(0.9610);transform-origin:0 0;">Section &amp; Elevation</div>
<div class="dd" style="left:1682.0px;top:174.5px;border-left-width:4.0px;border-right-width:4.0px;border-top:5px solid #d8d8d8"></div>
<svg class="a" style="left:1756px;top:73px" width="40" height="40" viewBox="0 0 40 40"><path d="M1 1h38v6H1z" fill="#a8a8a8"/><path d="M2 3h2v2H2z" fill="#444"/><path d="M1 8h18v30H1zM21 8h18v30H21z" fill="#d0d0d0"/><path d="M5 15h2M9 15h7M5 22h2M9 22h7M5 30h2M9 30h7M25 30h2M29 30h7" stroke="#555" stroke-width="1.3"/><path d="M25 14l10 4v6H25z" fill="#555"/></svg>
<div class="t" style="left:1757px;top:119.79px;font-size:15.6px;line-height:15.6px;color:#e6e6e6;font-family:'Liberation Sans',sans-serif;">Detail</div>
<div class="t" style="left:1737px;top:138.79px;font-size:15.6px;line-height:15.6px;color:#e6e6e6;font-family:'Liberation Sans',sans-serif;transform:scaleX(0.9271);transform-origin:0 0;">Components</div>
<div class="t" style="left:1755px;top:168.79px;font-size:15.6px;line-height:15.6px;color:#e6e6e6;font-family:'Liberation Sans',sans-serif;transform:scaleX(0.9437);transform-origin:0 0;">Details</div>
<div class="a" style="left:1426px;top:45px;width:323px;height:118px;border-radius:6px;background:linear-gradient(#ffffff,#e6e6e6);box-shadow:0 0 1px #999"></div>
<svg class="a" style="left:1703px;top:30px" width="32" height="16" viewBox="0 0 32 16"><path d="M0 15.5L16 0.5 32 15.5z" fill="#ffffff"/></svg>
<svg class="a" style="left:1438px;top:55px" width="22" height="33" viewBox="0 0 22 33"><defs><linearGradient id="bg1" x1="0" y1="0" x2="0" y2="1"><stop offset="0" stop-color="#fbe49a"/><stop offset="1" stop-color="#fff8d0"/></linearGradient></defs><path d="M11 2.2a8.6 8.6 0 0 0-8.6 8.6c0 3.2 2.2 5.8 3.8 8.6l1 2.2h7.6l1-2.2c1.6-2.8 3.8-5.4 3.8-8.6A8.6 8.6 0 0 0 11 2.2z" fill="url(#bg1)" stroke="#58606a" stroke-width="1.1"/><ellipse cx="8" cy="7.5" rx="2.4" ry="1.8" fill="#ffffff" opacity="0.9"/><path d="M7.5 22h7v5.5h-7z" fill="#e8eaee" stroke="#58606a" stroke-width="1"/><path d="M9.5 22.5h3v4.5h-3z" fill="#ffffff"/><path d="M7.5 27.5h7L11 31z" fill="#3e454e"/></svg>
<div class="t" style="left:1472px;top:60.05px;font-size:15.3px;line-height:15.3px;color:#101010;font-family:'Liberation Sans',sans-serif;transform:scaleX(0.9570);transform-origin:0 0;font-weight:bold;">3D display performance</div>
<div class="t" style="left:1472px;top:86.55px;font-size:15.3px;line-height:15.3px;color:#1a1a1a;font-family:'Liberation Sans',sans-serif;transform:scaleX(0.9839);transform-origin:0 0;">You can improve performance for</div>
<div class="t" style="left:1472px;top:106.55px;font-size:15.3px;line-height:15.3px;color:#1a1a1a;font-family:'Liberation Sans',sans-serif;transform:scaleX(0.9826);transform-origin:0 0;">3D pan, zoom, and orbit operations.</div>
<div class="t" style="left:1472px;top:132.05px;font-size:15.3px;line-height:15.3px;color:#0000ee;font-family:'Liberation Sans',sans-serif;transform:scaleX(0.9798);transform-origin:0 0;text-decoration:underline;">Don't show me this again</div>
<svg class="a" style="left:1726px;top:50px" width="16" height="16" viewBox="0 0 16 16"><circle cx="8" cy="8" r="7.5" fill="#8a8a8a"/><path d="M5 5l6 6M11 5l-6 6" stroke="#ffffff" stroke-width="1.8"/></svg>
<svg class="a" style="left:1718px;top:138px" width="20" height="12" viewBox="0 0 20 12"><path d="M1 1h18l-9 11z" fill="#555555"/></svg>
<svg class="a" style="left:9px;top:196px" width="8" height="20" viewBox="0 0 8 20"><path d="M7 0L1 20" stroke="#4a5262" stroke-width="1"/></svg>
<svg class="a" style="left:68px;top:196px" width="8" height="20" viewBox="0 0 8 20"><path d="M7 0L1 20" stroke="#4a5262" stroke-width="1"/></svg>
<svg class="a" style="left:285px;top:196px" width="8" height="20" viewBox="0 0 8 20"><path d="M7 0L1 20" stroke="#4a5262" stroke-width="1"/></svg>
<div class="t" style="left:28px;top:199.79px;font-size:15.6px;line-height:15.6px;color:#e6e6e6;font-family:'Liberation Sans',sans-serif;transform:scaleX(0.9410);transform-origin:0 0;">Start</div>
<div class="t" style="left:89px;top:199.79px;font-size:15.6px;line-height:15.6px;color:#e6e6e6;font-family:'Liberation Sans',sans-serif;transform:scaleX(1.0276);transform-origin:0 0;">egito*</div>
<svg class="a" style="left:154px;top:191px" width="92" height="30" viewBox="0 0 92 30"><path d="M12 0H91L79 30H0z" fill="#3b4453"/></svg>
<div class="t" style="left:175px;top:199.79px;font-size:15.6px;line-height:15.6px;color:#f4f4f4;font-family:'Liberation Sans',sans-serif;transform:scaleX(0.8775);transform-origin:0 0;font-weight:bold;">coisa</div>
<svg class="a" style="left:220px;top:201px" width="12" height="12" viewBox="0 0 12 12"><path d="M1 1l10 10M11 1L1 11" stroke="#b8bcc4" stroke-width="1.8"/></svg>
<svg class="a" style="left:257px;top:198px" width="15" height="15" viewBox="0 0 15 15"><path d="M7.5 0v15M0 7.5h15" stroke="#e6e6e6" stroke-width="2"/></svg>
<div class="t" style="left:1px;top:235.73px;font-size:14.5px;line-height:14.5px;color:#d8d8d8;font-family:'Liberation Sans',sans-serif;">[</div>
<div class="a" style="left:7px;top:241px;width:8px;height:1.2px;background:#f0c020;"></div>
<div class="t" style="left:18px;top:235.73px;font-size:14.5px;line-height:14.5px;color:#d8d8d8;font-family:'Liberation Sans',sans-serif;">]</div>
<div class="t" style="left:23px;top:235.73px;font-size:14.5px;line-height:14.5px;color:#d8d8d8;font-family:'Liberation Sans',sans-serif;transform:scaleX(1.0174);transform-origin:0 0;">[Custom View][2D Wireframe]</div>
<div class="a" style="left:1830px;top:245px;width:13px;height:3px;background:#eeeeee;"></div>
<div class="a" style="left:1856px;top:240px;width:10px;height:10px;background:transparent;border:2px solid #eeeeee"></div>
<div class="a" style="left:1859px;top:237px;width:9px;height:2px;background:#eeeeee;"></div>
<div class="a" style="left:1866px;top:237px;width:2px;height:9px;background:#eeeeee;"></div>
<svg class="a" style="left:1880px;top:237px" width="12" height="12" viewBox="0 0 12 12"><path d="M1.5 1.5l9 9M10.5 1.5l-9 9" stroke="#eeeeee" stroke-width="2.4"/></svg>
<svg class="a" style="left:0;top:0" width="1910" height="1016">
<path d="M932.9 378.0L1011.5 874.0M932.9 378.0L860.4 874.4M948.4 378.2L997.0 875.8M948.4 378.2L846.3 872.4M963.8 378.7L982.1 877.1M963.8 378.7L832.7 870.0M979.1 379.7L967.0 878.1M979.1 379.7L819.7 867.3M994.0 381.0L951.6 878.8M994.0 381.0L807.4 864.2M1008.6 382.8L936.1 879.0M1008.6 382.8L796.0 860.9M1022.7 384.9L920.6 878.8M1022.7 384.9L785.4 857.3M1036.3 387.4L905.2 878.3M1036.3 387.4L775.7 853.4M1049.3 390.2L889.9 877.4M1049.3 390.2L766.9 849.3M1061.6 393.4L875.0 876.1M1061.6 393.4L759.3 845.1M1073.0 396.8L860.4 874.4M1073.0 396.8L752.6 840.6M1083.6 400.6L846.3 872.4M1083.6 400.6L747.2 835.9M1093.3 404.6L832.7 870.0M1093.3 404.6L742.8 831.2M1102.1 408.8L819.7 867.3M1102.1 408.8L739.7 826.4M1109.7 413.3L807.4 864.2M1109.7 413.3L737.7 821.4M1116.4 417.9L796.0 860.9M1116.4 417.9L737.0 816.5M1121.8 422.8L785.4 857.3M1121.8 422.8L737.5 811.6M1126.2 427.7L775.7 853.4M1126.2 427.7L739.2 806.6M1129.3 432.7L766.9 849.3M1129.3 432.7L742.1 801.8M1131.3 437.8L759.3 845.1M1131.3 437.8L746.2 797.0M1132.0 443.0L752.6 840.6M1132.0 443.0L751.4 792.4M1131.5 448.1L747.2 835.9M1131.5 448.1L757.8 787.9M1129.8 453.2L742.8 831.2M1129.8 453.2L765.3 783.5M1126.9 458.3L739.7 826.4M1126.9 458.3L773.8 779.4M1122.8 463.2L737.7 821.4M1122.8 463.2L783.3 775.5M1117.6 468.1L737.0 816.5M1117.6 468.1L793.7 771.8M1111.2 472.8L737.5 811.6M1111.2 472.8L805.0 768.4M1103.7 477.3L739.2 806.6M1103.7 477.3L817.1 765.3M1095.2 481.6L742.1 801.8M1095.2 481.6L830.0 762.5M1085.7 485.6L746.2 797.0M1085.7 485.6L843.4 760.1M1075.3 489.4L751.4 792.4M1075.3 489.4L857.5 758.0M1064.0 493.0L757.8 787.9M1064.0 493.0L872.0 756.2M1051.9 496.2L765.3 783.5M1051.9 496.2L886.9 754.9M1039.0 499.1L773.8 779.4M1039.0 499.1L902.0 753.9M1025.6 501.6L783.3 775.5M1025.6 501.6L917.4 753.2M1011.5 503.8L793.7 771.8M1011.5 503.8L932.9 753.0M997.0 505.6L805.0 768.4M997.0 505.6L948.4 753.2M982.1 507.1L817.1 765.3M982.1 507.1L963.8 753.7M967.0 508.1L830.0 762.5M967.0 508.1L979.1 754.6M951.6 508.8L843.4 760.1M951.6 508.8L994.0 755.9M936.1 509.0L857.5 758.0M936.1 509.0L1008.6 757.6M920.6 508.8L872.0 756.2M920.6 508.8L1022.7 759.6M905.2 508.3L886.9 754.9M905.2 508.3L1036.3 762.0M889.9 507.3L902.0 753.9M889.9 507.3L1049.3 764.7M875.0 506.0L917.4 753.2M875.0 506.0L1061.6 767.8M860.4 504.2L932.9 753.0M860.4 504.2L1073.0 771.1M846.3 502.1L948.4 753.2M846.3 502.1L1083.6 774.7M832.7 499.6L963.8 753.7M832.7 499.6L1093.3 778.6M819.7 496.8L979.1 754.6M819.7 496.8L1102.1 782.7M807.4 493.6L994.0 755.9M807.4 493.6L1109.7 786.9M796.0 490.2L1008.6 757.6M796.0 490.2L1116.4 791.4M785.4 486.4L1022.7 759.6M785.4 486.4L1121.8 796.1M775.7 482.4L1036.3 762.0M775.7 482.4L1126.2 800.8M766.9 478.2L1049.3 764.7M766.9 478.2L1129.3 805.6M759.3 473.7L1061.6 767.8M759.3 473.7L1131.3 810.6M752.6 469.1L1073.0 771.1M752.6 469.1L1132.0 815.5M747.2 464.2L1083.6 774.7M747.2 464.2L1131.5 820.4M742.8 459.3L1093.3 778.6M742.8 459.3L1129.8 825.4M739.7 454.3L1102.1 782.7M739.7 454.3L1126.9 830.2M737.7 449.2L1109.7 786.9M737.7 449.2L1122.8 835.0M737.0 444.0L1116.4 791.4M737.0 444.0L1117.6 839.6M737.5 438.9L1121.8 796.1M737.5 438.9L1111.2 844.1M739.2 433.8L1126.2 800.8M739.2 433.8L1103.7 848.5M742.1 428.7L1129.3 805.6M742.1 428.7L1095.2 852.6M746.2 423.8L1131.3 810.6M746.2 423.8L1085.7 856.5M751.4 418.9L1132.0 815.5M751.4 418.9L1075.3 860.2M757.8 414.2L1131.5 820.4M757.8 414.2L1064.0 863.6M765.3 409.7L1129.8 825.4M765.3 409.7L1051.9 866.7M773.8 405.4L1126.9 830.2M773.8 405.4L1039.0 869.5M783.3 401.4L1122.8 835.0M783.3 401.4L1025.6 871.9M793.7 397.6L1117.6 839.6M793.7 397.6L1011.5 874.0M805.0 394.0L1111.2 844.1M805.0 394.0L997.0 875.8M817.1 390.8L1103.7 848.5M817.1 390.8L982.1 877.1M830.0 387.9L1095.2 852.6M830.0 387.9L967.0 878.1M843.4 385.4L1085.7 856.5M843.4 385.4L951.6 878.8M857.5 383.2L1075.3 860.2M857.5 383.2L936.1 879.0M872.0 381.4L1064.0 863.6M872.0 381.4L920.6 878.8M886.9 379.9L1051.9 866.7M886.9 379.9L905.2 878.3M902.0 378.9L1039.0 869.5M902.0 378.9L889.9 877.4M917.4 378.2L1025.6 871.9M917.4 378.2L875.0 876.1" stroke="#f8f8f8" stroke-width="0.9" fill="none"/>
<ellipse cx="934.5" cy="816" rx="197.5" ry="63" stroke="#f2f2f2" stroke-width="1.8" fill="none"/>
<ellipse cx="934.8" cy="816.2" rx="39.2" ry="12.7" stroke="#e6e6e6" stroke-width="1.1" fill="none"/>
<path d="M918.8 782.5L932.3 795.5M932.3 782.5L918.2 796.1M913.3 798.8L935 815.6M935 816.1L877.6 823.2M879.8 804.8L886.3 810.7L891.7 805.8M886.3 810.7V816.7M940.4 741H953.4L940.4 755.5H953.4M935 757V815.6" stroke="#e6e6e6" stroke-width="1" fill="none"/>
</svg>
<div class="a" style="left:100px;top:302px;width:278px;height:436px;background:#2b313b;border-radius:3px"></div>
<div class="a" style="left:377px;top:306px;width:27px;height:406px;background:#2b313b;"></div>
<div class="a" style="left:129px;top:306px;width:248px;height:429px;background:#3b4453;border-radius:4px 0 0 4px"></div>
<div class="a" style="left:377px;top:306px;width:27px;height:134px;background:#3b4453;border-radius:0 4px 4px 0"></div>
<div class="a" style="left:377px;top:441px;width:27px;height:136px;background:#30363f;border-radius:0 4px 4px 0"></div>
<div class="a" style="left:378px;top:578px;width:26px;height:134px;background:#30363f;border-radius:0 4px 4px 0"></div>
<div class="t" style="left:391px;top:373.5px;font-size:14.5px;line-height:14.5px;color:#d6d6d6;transform:translate(-50%,-50%) rotate(-90deg) scaleX(1.041);transform-origin:50% 50%;width:45.1px;text-align:center">Design</div>
<div class="t" style="left:391px;top:510px;font-size:14.5px;line-height:14.5px;color:#b8bcc4;transform:translate(-50%,-50%) rotate(-90deg) scaleX(1.010);transform-origin:50% 50%;width:47.5px;text-align:center">Display</div>
<div class="t" style="left:391px;top:646px;font-size:14.5px;line-height:14.5px;color:#b8bcc4;transform:translate(-50%,-50%) rotate(-90deg) scaleX(1.022);transform-origin:50% 50%;width:95.9px;text-align:center">Extended Data</div>
<div class="t" style="left:114px;top:663px;font-size:14.5px;line-height:14.5px;color:#b8bcc4;transform:translate(-50%,-50%) rotate(-90deg) scaleX(0.858);transform-origin:50% 50%;width:93.2px;text-align:center">PROPERTIES</div>
<svg class="a" style="left:109px;top:309px" width="12" height="12" viewBox="0 0 12 12"><path d="M1.5 1.5l9 9M10.5 1.5l-9 9" stroke="#d8d8d8" stroke-width="2.4"/></svg>
<svg class="a" style="left:109px;top:333px" width="12" height="13" viewBox="0 0 12 13"><path d="M1 0v13" stroke="#d8d8d8" stroke-width="2"/><path d="M11 1v11L4 6.5z" fill="#d8d8d8"/></svg>
<svg class="a" style="left:108px;top:356px" width="14" height="14" viewBox="0 0 14 14"><circle cx="7" cy="7" r="4" fill="none" stroke="#d8d8d8" stroke-width="3"/><path d="M7 0v14M0 7h14M2 2l10 10M12 2L2 12" stroke="#d8d8d8" stroke-width="2.2"/><circle cx="7" cy="7" r="2" fill="#2b313b"/></svg>
<svg class="a" style="left:106px;top:716px" width="17" height="21" viewBox="0 0 17 21"><path d="M1 1h15v19H1z" fill="#d8d8d8"/><path d="M3 3h11v8H3z" fill="#7cc8f8"/><path d="M3 14h11M3 17h11" stroke="#888" stroke-width="1"/></svg>
<div class="a" style="left:154px;top:322px;width:119px;height:28px;background:#4a5468;border:1px solid #2e3440;border-radius:2px"></div>
<div class="t" style="left:158px;top:330.05px;font-size:15.3px;line-height:15.3px;color:#eeeeee;font-family:'Liberation Sans',sans-serif;transform:scaleX(0.9740);transform-origin:0 0;">No selection</div>
<div class="dd" style="left:257.0px;top:334px;border-left-width:5.0px;border-right-width:5.0px;border-top:6px solid #d8d8d8"></div>
<svg class="a" style="left:281px;top:326px" width="23" height="22" viewBox="0 0 23 22"><path d="M1 5h11v11H1z" fill="#58acf0"/><path d="M7 11h11v11H7z" fill="#7cc4f8"/><path d="M17 0v10M12 5h10" stroke="#40c060" stroke-width="2.4"/></svg>
<svg class="a" style="left:310px;top:326px" width="24" height="22" viewBox="0 0 24 22"><path d="M2 2h15v13H2z" fill="#60c080" stroke="#40a060" stroke-dasharray="2 1"/><path d="M15 9v12l3-3 3 5 2-1-3-5h4z" fill="#eeeeee" stroke="#333" stroke-width="0.6"/></svg>
<svg class="a" style="left:340px;top:326px" width="24" height="23" viewBox="0 0 24 23"><path d="M1 6v13l3-3 3 5 2-1-3-5h4z" fill="#eeeeee" stroke="#333" stroke-width="0.6"/><path d="M10 9h13v13H10z" fill="#eeeeee"/><path d="M12 12h2M15 12h6M12 15h2M15 15h6M12 18h2M15 18h6" stroke="#58acf0" stroke-width="1.3"/><path d="M13 0l-4 5h3l-2 4 6-5h-3l2-4z" fill="#f4c040"/></svg>
<div class="a" style="left:153px;top:356px;width:207px;height:27px;background:#2b313b;"></div>
<div class="t" style="left:162px;top:362.05px;font-size:15.3px;line-height:15.3px;color:#f0f0f0;font-family:'Liberation Sans',sans-serif;transform:scaleX(0.9478);transform-origin:0 0;font-weight:bold;">General</div>
<div class="dd" style="left:339.0px;top:367px;border-left-width:6.0px;border-right-width:6.0px;border-top:6px solid #d0d0d0"></div>
<div class="a" style="left:174px;top:383px;width:186px;height:27px;background:#3b4453;border:1px solid #2b313b"></div>
<div class="a" style="left:272px;top:383px;width:1px;height:27px;background:#2b313b;"></div>
<div class="t" style="left:184px;top:388.05px;font-size:15.3px;line-height:15.3px;color:#d8dade;font-family:'Liberation Sans',sans-serif;transform:scaleX(0.9847);transform-origin:0 0;">Color</div>
<div class="a" style="left:276px;top:386px;width:18px;height:18px;background:#ffffff;"></div>
<div class="t" style="left:301.5px;top:388.05px;font-size:15.3px;line-height:15.3px;color:#eeeeee;font-family:'Liberation Sans',sans-serif;transform:scaleX(0.8998);transform-origin:0 0;">ByLayer</div>
<div class="a" style="left:174px;top:409px;width:186px;height:27px;background:#3b4453;border:1px solid #2b313b"></div>
<div class="a" style="left:272px;top:409px;width:1px;height:27px;background:#2b313b;"></div>
<div class="t" style="left:184px;top:414.05px;font-size:15.3px;line-height:15.3px;color:#d8dade;font-family:'Liberation Sans',sans-serif;transform:scaleX(0.9146);transform-origin:0 0;">Layer</div>
<div class="t" style="left:276.5px;top:414.05px;font-size:15.3px;line-height:15.3px;color:#eeeeee;font-family:'Liberation Sans',sans-serif;transform:scaleX(0.9209);transform-origin:0 0;">hiper_1</div>
<div class="a" style="left:174px;top:435px;width:186px;height:27px;background:#3b4453;border:1px solid #2b313b"></div>
<div class="a" style="left:272px;top:435px;width:1px;height:27px;background:#2b313b;"></div>
<div class="t" style="left:184px;top:440.05px;font-size:15.3px;line-height:15.3px;color:#d8dade;font-family:'Liberation Sans',sans-serif;transform:scaleX(0.9768);transform-origin:0 0;">Linetype</div>
<div class="a" style="left:277px;top:448px;width:36px;height:1.2px;background:#e6e6e6;"></div>
<div class="t" style="left:318.5px;top:440.05px;font-size:15.3px;line-height:15.3px;color:#eeeeee;font-family:'Liberation Sans',sans-serif;transform:scaleX(0.8692);transform-origin:0 0;">ByL...</div>
<div class="a" style="left:174px;top:461px;width:186px;height:27px;background:#3b4453;border:1px solid #2b313b"></div>
<div class="a" style="left:272px;top:461px;width:1px;height:27px;background:#2b313b;"></div>
<div class="t" style="left:184px;top:466.05px;font-size:15.3px;line-height:15.3px;color:#d8dade;font-family:'Liberation Sans',sans-serif;transform:scaleX(0.9455);transform-origin:0 0;">Linetype s...</div>
<div class="t" style="left:276.5px;top:466.05px;font-size:15.3px;line-height:15.3px;color:#eeeeee;font-family:'Liberation Sans',sans-serif;transform:scaleX(0.8976);transform-origin:0 0;">1.0000</div>
<div class="a" style="left:174px;top:487px;width:186px;height:27px;background:#3b4453;border:1px solid #2b313b"></div>
<div class="a" style="left:272px;top:487px;width:1px;height:27px;background:#2b313b;"></div>
<div class="t" style="left:184px;top:492.05px;font-size:15.3px;line-height:15.3px;color:#d8dade;font-family:'Liberation Sans',sans-serif;transform:scaleX(1.0116);transform-origin:0 0;">Lineweight</div>
<div class="a" style="left:277px;top:500px;width:36px;height:1.2px;background:#e6e6e6;"></div>
<div class="t" style="left:318.5px;top:492.05px;font-size:15.3px;line-height:15.3px;color:#eeeeee;font-family:'Liberation Sans',sans-serif;transform:scaleX(0.8692);transform-origin:0 0;">ByL...</div>
<div class="a" style="left:174px;top:513px;width:186px;height:27px;background:#3b4453;border:1px solid #2b313b"></div>
<div class="a" style="left:272px;top:513px;width:1px;height:27px;background:#2b313b;"></div>
<div class="t" style="left:184px;top:518.05px;font-size:15.3px;line-height:15.3px;color:#d8dade;font-family:'Liberation Sans',sans-serif;transform:scaleX(0.9290);transform-origin:0 0;">Transparen...</div>
<div class="t" style="left:276.5px;top:518.05px;font-size:15.3px;line-height:15.3px;color:#eeeeee;font-family:'Liberation Sans',sans-serif;transform:scaleX(0.8998);transform-origin:0 0;">ByLayer</div>
<div class="a" style="left:174px;top:539px;width:186px;height:27px;background:#3b4453;border:1px solid #2b313b"></div>
<div class="a" style="left:272px;top:539px;width:1px;height:27px;background:#2b313b;"></div>
<div class="t" style="left:184px;top:544.05px;font-size:15.3px;line-height:15.3px;color:#d8dade;font-family:'Liberation Sans',sans-serif;transform:scaleX(0.9220);transform-origin:0 0;">Thickness</div>
<div class="t" style="left:276.5px;top:544.05px;font-size:15.3px;line-height:15.3px;color:#eeeeee;font-family:'Liberation Sans',sans-serif;transform:scaleX(0.8976);transform-origin:0 0;">0.0000</div>
<div class="a" style="left:153px;top:569px;width:207px;height:27px;background:#2b313b;"></div>
<div class="t" style="left:162px;top:575.05px;font-size:15.3px;line-height:15.3px;color:#f0f0f0;font-family:'Liberation Sans',sans-serif;transform:scaleX(1.0936);transform-origin:0 0;font-weight:bold;">3D Visualization</div>
<div class="dd" style="left:339.0px;top:580px;border-left-width:6.0px;border-right-width:6.0px;border-top:6px solid #d0d0d0"></div>
<div class="a" style="left:174px;top:595px;width:186px;height:27px;background:#3b4453;border:1px solid #2b313b"></div>
<div class="a" style="left:272px;top:595px;width:1px;height:27px;background:#2b313b;"></div>
<div class="t" style="left:184px;top:600.55px;font-size:15.3px;line-height:15.3px;color:#d8dade;font-family:'Liberation Sans',sans-serif;transform:scaleX(1.0108);transform-origin:0 0;">Material</div>
<div class="t" style="left:276.5px;top:600.55px;font-size:15.3px;line-height:15.3px;color:#eeeeee;font-family:'Liberation Sans',sans-serif;transform:scaleX(0.8998);transform-origin:0 0;">ByLayer</div>
<div class="a" style="left:153px;top:626px;width:207px;height:27px;background:#2b313b;"></div>
<div class="t" style="left:162px;top:632.05px;font-size:15.3px;line-height:15.3px;color:#c8ccd2;font-family:'Liberation Sans',sans-serif;transform:scaleX(0.9557);transform-origin:0 0;font-weight:bold;">Plot style</div>
<svg class="a" style="left:341px;top:634px" width="8" height="11" viewBox="0 0 8 11"><path d="M7 0v11L0 5.5z" fill="#d0d0d0"/></svg>
<div class="a" style="left:153px;top:657px;width:207px;height:27px;background:#2b313b;"></div>
<div class="t" style="left:162px;top:663.05px;font-size:15.3px;line-height:15.3px;color:#c8ccd2;font-family:'Liberation Sans',sans-serif;transform:scaleX(0.9830);transform-origin:0 0;font-weight:bold;">View</div>
<svg class="a" style="left:341px;top:665px" width="8" height="11" viewBox="0 0 8 11"><path d="M7 0v11L0 5.5z" fill="#d0d0d0"/></svg>
<div class="a" style="left:153px;top:688px;width:207px;height:27px;background:#2b313b;"></div>
<div class="t" style="left:162px;top:694.05px;font-size:15.3px;line-height:15.3px;color:#c8ccd2;font-family:'Liberation Sans',sans-serif;transform:scaleX(0.9409);transform-origin:0 0;font-weight:bold;">Misc</div>
<svg class="a" style="left:341px;top:696px" width="8" height="11" viewBox="0 0 8 11"><path d="M7 0v11L0 5.5z" fill="#d0d0d0"/></svg>
<div class="a" style="left:1162px;top:285px;width:32px;height:129px;background:#2b313b;border-radius:2px 0 0 2px"></div>
<svg class="a" style="left:1166px;top:291px" width="24" height="6" viewBox="0 0 24 6"><rect x="0" y="0" width="2" height="2" fill="#c8c8c8"/><rect x="0" y="3" width="2" height="2" fill="#c8c8c8"/><rect x="4" y="0" width="2" height="2" fill="#c8c8c8"/><rect x="4" y="3" width="2" height="2" fill="#c8c8c8"/><rect x="8" y="0" width="2" height="2" fill="#c8c8c8"/><rect x="8" y="3" width="2" height="2" fill="#c8c8c8"/><rect x="12" y="0" width="2" height="2" fill="#c8c8c8"/><rect x="12" y="3" width="2" height="2" fill="#c8c8c8"/><rect x="16" y="0" width="2" height="2" fill="#c8c8c8"/><rect x="16" y="3" width="2" height="2" fill="#c8c8c8"/><rect x="20" y="0" width="2" height="2" fill="#c8c8c8"/><rect x="20" y="3" width="2" height="2" fill="#c8c8c8"/></svg>
<svg class="a" style="left:1168px;top:306px" width="13" height="13" viewBox="0 0 13 13"><path d="M1.5 1.5l10 10M11.5 1.5l-10 10" stroke="#c8c8c8" stroke-width="2"/></svg>
<svg class="a" style="left:1167px;top:332px" width="20" height="21" viewBox="0 0 20 21"><path d="M2 19l9-9" stroke="#b8b8b8" stroke-width="3" stroke-linecap="round"/><path d="M11 10a5 5 0 0 1 7-7l-3 3 1 2 2 1 3-3a5 5 0 0 1-7 7z" fill="#b8b8b8"/></svg>
<div class="a" style="left:1193px;top:286px;width:519px;height:101px;background:#9a9b9d;border-radius:0 2px 0 0"></div>
<div class="a" style="left:1193px;top:387px;width:519px;height:1.5px;background:#2b313b;"></div>
<div class="a" style="left:1193px;top:388.5px;width:519px;height:24px;background:#bebfc1;border-radius:0 0 2px 0"></div>
<div class="t" style="left:1197px;top:293.50px;font-size:15px;line-height:15px;color:#1a1a1a;font-family:'Liberation Mono',monospace;">****&nbsp;System&nbsp;Variable&nbsp;Changed&nbsp;****</div>
<div class="t" style="left:1197px;top:312.50px;font-size:15px;line-height:15px;color:#1a1a1a;font-family:'Liberation Mono',monospace;">1&nbsp;of&nbsp;the&nbsp;monitored&nbsp;system&nbsp;variables&nbsp;has&nbsp;changed&nbsp;from</div>
<div class="t" style="left:1197px;top:331.50px;font-size:15px;line-height:15px;color:#1a1a1a;font-family:'Liberation Mono',monospace;">the&nbsp;preferred&nbsp;value.&nbsp;Use&nbsp;SYSVARMONITOR&nbsp;command&nbsp;to&nbsp;view</div>
<div class="t" style="left:1197px;top:350.50px;font-size:15px;line-height:15px;color:#1a1a1a;font-family:'Liberation Mono',monospace;">changes.</div>
<div class="t" style="left:1197px;top:369.50px;font-size:15px;line-height:15px;color:#1a1a1a;font-family:'Liberation Mono',monospace;">Command:</div>
<svg class="a" style="left:1198px;top:392px" width="34" height="16" viewBox="0 0 34 16"><path d="M1 1h20v14H1z" fill="#d8d8d8" stroke="#555" stroke-width="1"/><path d="M1 1h20v3H1z" fill="#555"/><path d="M4 7l3 2-3 2M8 12h4" stroke="#555" stroke-width="0.9" fill="none"/><path d="M25 6h8l-4 5z" fill="#444"/></svg>
<div class="t" style="left:1238px;top:393.50px;font-size:15px;line-height:15px;color:#6a6a6a;font-family:'Liberation Mono',monospace;font-style:italic;">Type&nbsp;a&nbsp;command</div>
<svg class="a" style="left:1694px;top:396px" width="13" height="8" viewBox="0 0 13 8"><path d="M0.5 7.5L6.5 0.5l6 7z" fill="#555"/></svg>
<svg class="a" style="left:1740px;top:300px" width="160" height="160" viewBox="1740 300 160 160">
<defs><radialGradient id="sh" cx="0.5" cy="0.5" r="0.5"><stop offset="0" stop-color="#161a20" stop-opacity="1"/><stop offset="0.6" stop-color="#191d24" stop-opacity="0.8"/><stop offset="1" stop-color="#212830" stop-opacity="0"/></radialGradient></defs>
<path fill-rule="evenodd" fill="#474e58" d="M1748 375.7a69 26.3 0 1 0 138 0a69 26.3 0 1 0 -138 0zM1763.3 372.4a54 16.3 0 1 0 108 0a54 16.3 0 1 0 -108 0z"/>
<ellipse cx="1818" cy="374" rx="42" ry="13" fill="url(#sh)"/>
<path d="M1785.2 313.4L1830.3 309.2 1851.2 321 1800.2 326z" fill="#b8b9bc"/>
<path d="M1785.2 313.4L1800.2 326 1801.9 378.6 1786.9 360.2z" fill="#a3a5a8"/>
<path d="M1800.2 326L1851.2 321 1850.4 372 1801.9 378.6z" fill="#acaeb1"/>
<path d="M1800.5 327h8v9h-8z" fill="#9ca4ae"/>
<path d="M1800.2 326l1.7 52.6M1800.2 326L1851.2 321M1785.2 313.4l15 12.6" stroke="#85878b" stroke-width="0.8" stroke-dasharray="3 2" fill="none"/>
<text x="0" y="0" font-family="Liberation Sans" font-weight="bold" font-size="13.5" fill="#5a5e65" transform="translate(1814.5 356.5) rotate(-6) scale(0.82 1.05)">LEFT</text>
<text x="0" y="0" font-family="Liberation Sans" font-weight="bold" font-size="13" fill="#c4c6c8" text-anchor="middle" dominant-baseline="central" transform="translate(1755 378.6) rotate(-16) scale(1.9 0.9)">N</text>
<text x="0" y="0" font-family="Liberation Sans" font-weight="bold" font-size="13" fill="#c4c6c8" text-anchor="middle" dominant-baseline="central" transform="translate(1843 397.5) rotate(163) scale(1.85 1.25)">W</text>
<text x="0" y="0" font-family="Liberation Sans" font-weight="bold" font-size="12" fill="#c4c6c8" text-anchor="middle" dominant-baseline="central" transform="translate(1873.5 360.5) rotate(-74) scale(0.75 1.55)">S</text>
<path d="M1811 316l4 3 6-2M1815 312l0 7M1818 313l3 2" stroke="#62666c" stroke-width="1.6" fill="none"/>
<path d="M1789 337l3 8-1 4 4 3M1792 345l4 -3" stroke="#5a5e65" stroke-width="1.8" fill="none"/>
</svg>
<div class="a" style="left:1777px;top:434px;width:81px;height:20px;background:#8e929b;border-radius:5px;border:1px solid #a0a4ac"></div>
<div class="t" style="left:1784px;top:437.15px;font-size:14px;line-height:14px;color:#5e626a;font-family:'Liberation Sans',sans-serif;transform:scaleX(0.8732);transform-origin:0 0;">Unnamed</div>
<svg class="a" style="left:1842px;top:440px" width="11" height="7" viewBox="0 0 11 7"><path d="M0.5 0.5h10L5.5 6.5z" fill="none" stroke="#b0b4bb" stroke-width="1"/></svg>
<svg class="a" style="left:7px;top:980px" width="86" height="30" viewBox="0 0 86 30"><path d="M12 0H86L74 30H0z" fill="#3b4453"/></svg>
<div class="t" style="left:28px;top:988.35px;font-size:15.3px;line-height:15.3px;color:#f4f4f4;font-family:'Liberation Sans',sans-serif;font-weight:bold;">Model</div>
<div class="t" style="left:102px;top:988.35px;font-size:15.3px;line-height:15.3px;color:#e6e6e6;font-family:'Liberation Sans',sans-serif;transform:scaleX(0.8815);transform-origin:0 0;">a3</div>
<svg class="a" style="left:129px;top:985px" width="8" height="20" viewBox="0 0 8 20"><path d="M7 0L1 20" stroke="#4a5262" stroke-width="1"/></svg>
<svg class="a" style="left:149px;top:988px" width="16" height="15" viewBox="0 0 16 15"><path d="M8 0v15M0 7.5h16" stroke="#e6e6e6" stroke-width="2"/></svg>
<svg class="a" style="left:179px;top:985px" width="8" height="20" viewBox="0 0 8 20"><path d="M7 0L1 20" stroke="#4a5262" stroke-width="1"/></svg>
<div class="a" style="left:769px;top:982px;width:60px;height:30px;background:#3b4453;"></div>
<div class="a" style="left:831px;top:982px;width:80px;height:30px;background:#3b4453;"></div>
<div class="a" style="left:914px;top:982px;width:30px;height:30px;background:#3b4453;"></div>
<div class="a" style="left:945px;top:982px;width:80px;height:30px;background:#3b4453;"></div>
<div class="a" style="left:1026.5px;top:982px;width:79.5px;height:30px;background:#3b4453;"></div>
<div class="a" style="left:1107px;top:982px;width:30px;height:30px;background:#3b4453;"></div>
<div class="a" style="left:1138px;top:982px;width:30px;height:30px;background:#3b4453;"></div>
<div class="a" style="left:1171.5px;top:982px;width:143.5px;height:30px;background:#3b4453;"></div>
<div class="a" style="left:1318px;top:982px;width:50px;height:30px;background:#3b4453;"></div>
<div class="a" style="left:1369px;top:982px;width:30px;height:30px;background:#3b4453;"></div>
<div class="a" style="left:1402px;top:982px;width:81.5px;height:30px;background:#3b4453;"></div>
<div class="a" style="left:1485.5px;top:982px;width:87.5px;height:30px;background:#3b4453;"></div>
<div class="a" style="left:1576px;top:982px;width:91.5px;height:30px;background:#3b4453;"></div>
<div class="a" style="left:1671px;top:982px;width:30px;height:30px;background:#3b4453;"></div>
<div class="a" style="left:1704px;top:982px;width:136px;height:30px;background:#3b4453;"></div>
<div class="a" style="left:1843px;top:982px;width:60px;height:30px;background:#3b4453;"></div>
<div class="a" style="left:1057px;top:982px;width:28px;height:30px;background:#5e8ec4;"></div>
<div class="a" style="left:1172px;top:982px;width:28px;height:30px;background:#5e8ec4;"></div>
<div class="a" style="left:1709px;top:982px;width:28px;height:30px;background:#5e8ec4;"></div>
<div class="a" style="left:1743px;top:982px;width:28px;height:30px;background:#5e8ec4;"></div>
<div class="t" style="left:772px;top:990.05px;font-size:15.3px;line-height:15.3px;color:#eeeeee;font-family:'Liberation Sans',sans-serif;transform:scaleX(0.9741);transform-origin:0 0;">MODEL</div>
<svg class="a" style="left:835px;top:987px" width="20" height="20" viewBox="0 0 20 20"><path d="M5 1v18M10 1v18M15 1v18M1 5h18M1 10h18M1 15h18" stroke="#d8d8d8" stroke-width="1.2"/></svg>
<svg class="a" style="left:866px;top:988px" width="18" height="18" viewBox="0 0 18 18"><rect x="1" y="1" width="3" height="3" fill="#d8d8d8"/><rect x="1" y="7" width="3" height="3" fill="#d8d8d8"/><rect x="1" y="13" width="3" height="3" fill="#d8d8d8"/><rect x="7" y="1" width="3" height="3" fill="#d8d8d8"/><rect x="7" y="7" width="3" height="3" fill="#d8d8d8"/><rect x="7" y="13" width="3" height="3" fill="#d8d8d8"/><rect x="13" y="1" width="3" height="3" fill="#d8d8d8"/><rect x="13" y="7" width="3" height="3" fill="#d8d8d8"/><rect x="13" y="13" width="3" height="3" fill="#d8d8d8"/></svg>
<div class="dd" style="left:896.0px;top:994px;border-left-width:5.0px;border-right-width:5.0px;border-top:5px solid #d8d8d8"></div>
<svg class="a" style="left:918px;top:986px" width="22" height="22" viewBox="0 0 22 22"><path d="M5 1v9M0.5 5.5h9" stroke="#d8d8d8" stroke-width="1.3"/><path d="M8 12h13v6H8z" fill="#d8d8d8"/><path d="M9 13h4v4H9z" fill="#3b4453"/></svg>
<svg class="a" style="left:949px;top:986px" width="22" height="22" viewBox="0 0 22 22"><path d="M2 1v19h19" stroke="#d8d8d8" stroke-width="1.3" fill="none"/><path d="M2 14h6v6" stroke="#d8d8d8" stroke-width="1" fill="none"/></svg>
<svg class="a" style="left:978px;top:986px" width="24" height="22" viewBox="0 0 24 22"><circle cx="10" cy="12" r="8" fill="none" stroke="#d8d8d8" stroke-width="1.3"/><path d="M8 14l10-11M2 12h20" stroke="#d8d8d8" stroke-width="1.2"/></svg>
<div class="dd" style="left:1010.0px;top:994px;border-left-width:5.0px;border-right-width:5.0px;border-top:5px solid #d8d8d8"></div>
<svg class="a" style="left:1030px;top:986px" width="22" height="22" viewBox="0 0 22 22"><path d="M1 19h20M2 19L18 4" stroke="#d8d8d8" stroke-width="1.3"/><rect x="9" y="10" width="4" height="4" fill="#d8d8d8"/></svg>
<svg class="a" style="left:1062px;top:986px" width="20" height="22" viewBox="0 0 20 22"><path d="M4 6h14v14H4z" fill="none" stroke="#eeeeee" stroke-width="1.4"/><path d="M1 2h6v6H1z" fill="#5e8ec4" stroke="#eeeeee" stroke-width="1.2"/></svg>
<div class="dd" style="left:1091.0px;top:994px;border-left-width:5.0px;border-right-width:5.0px;border-top:5px solid #d8d8d8"></div>
<svg class="a" style="left:1111px;top:988px" width="22" height="18" viewBox="0 0 22 18"><path d="M1 2h20M1 7h14M1 12h20M1 17h14" stroke="#d8d8d8" stroke-width="2.5"/></svg>
<svg class="a" style="left:1141px;top:985px" width="24" height="24" viewBox="0 0 24 24"><path d="M4 0v9M0 4.5h8" stroke="#d8d8d8" stroke-width="1.3"/><path d="M5 8v14h14" stroke="#d8d8d8" stroke-width="1.2" fill="none"/><path d="M9 11h13v12H9z" fill="#78d090"/></svg>
<svg class="a" style="left:1174px;top:985px" width="25" height="24" viewBox="0 0 25 24"><path d="M11 2l4 14 7 6-10-3-10 3 7-6z" fill="#ffffff"/><circle cx="19" cy="5" r="3.5" fill="none" stroke="#ffffff" stroke-width="1.3"/></svg>
<svg class="a" style="left:1205px;top:985px" width="25" height="24" viewBox="0 0 25 24"><path d="M11 2l4 14 7 6-10-3-10 3 7-6z" fill="#d8d8d8"/><path d="M19 1l-3 5h3l-2 5" stroke="#d8d8d8" stroke-width="1.5" fill="none"/></svg>
<svg class="a" style="left:1235px;top:985px" width="25" height="24" viewBox="0 0 25 24"><path d="M11 2l4 14 7 6-10-3-10 3 7-6z" fill="#d8d8d8"/></svg>
<div class="t" style="left:1267px;top:989.85px;font-size:15.3px;line-height:15.3px;color:#eeeeee;font-family:'Liberation Sans',sans-serif;transform:scaleX(0.7575);transform-origin:0 0;">1:1_1</div>
<div class="dd" style="left:1300.0px;top:994px;border-left-width:5.0px;border-right-width:5.0px;border-top:5px solid #d8d8d8"></div>
<svg class="a" style="left:1322px;top:985px" width="24" height="24" viewBox="0 0 24 24"><circle cx="12" cy="12" r="6" fill="none" stroke="#d8d8d8" stroke-width="4"/><path d="M12 1v22M1 12h22M4 4l16 16M20 4L4 20" stroke="#d8d8d8" stroke-width="3.5"/><circle cx="12" cy="12" r="3" fill="#3b4453"/></svg>
<div class="dd" style="left:1353.0px;top:994px;border-left-width:5.0px;border-right-width:5.0px;border-top:5px solid #d8d8d8"></div>
<svg class="a" style="left:1373px;top:986px" width="21" height="21" viewBox="0 0 21 21"><path d="M10.5 1v19M1 10.5h19" stroke="#d8d8d8" stroke-width="2.4"/></svg>
<div class="t" style="left:1402px;top:989.85px;font-size:15.3px;line-height:15.3px;color:#eeeeee;font-family:'Liberation Sans',sans-serif;">Standard</div>
<div class="dd" style="left:1468.0px;top:994px;border-left-width:5.0px;border-right-width:5.0px;border-top:5px solid #d8d8d8"></div>
<svg class="a" style="left:1489px;top:985px" width="22" height="24" viewBox="0 0 22 24"><path d="M2 10l9-5 9 5-9 5z" fill="#58acf0"/><path d="M2 10v6l9 5 9-5v-6l-9 5z" fill="#d8d8d8"/><path d="M4 8c0-6 14-6 14 0" stroke="#d8d8d8" stroke-dasharray="2 1.5" fill="none"/></svg>
<div class="t" style="left:1522px;top:989.85px;font-size:15.3px;line-height:15.3px;color:#eeeeee;font-family:'Liberation Sans',sans-serif;transform:scaleX(0.9190);transform-origin:0 0;">1.0668</div>
<svg class="a" style="left:1580px;top:985px" width="22" height="24" viewBox="0 0 22 24"><path d="M8 8l6-4 6 4v8l-6 4-6-4z" fill="none" stroke="#c8c8c8" stroke-width="1.2"/><path d="M8 8l6 4 6-4M14 12v8" stroke="#c8c8c8" stroke-width="1.2" fill="none"/><path d="M1 16h5v5H1z" fill="none" stroke="#d99a6a" stroke-width="1.2"/><path d="M1 1h5L1 6h5" stroke="#c8c8c8" fill="none"/></svg>
<div class="t" style="left:1611px;top:989.85px;font-size:15.3px;line-height:15.3px;color:#eeeeee;font-family:'Liberation Sans',sans-serif;transform:scaleX(0.9511);transform-origin:0 0;">+0.0000</div>
<svg class="a" style="left:1675px;top:986px" width="24" height="22" viewBox="0 0 24 22"><path d="M1 1h8v8H1z" fill="none" stroke="#d8d8d8" stroke-width="1.2"/><circle cx="17" cy="9" r="4.5" fill="none" stroke="#d8d8d8" stroke-width="1.2"/><path d="M8 21l4-7 4 7z" fill="none" stroke="#d8d8d8" stroke-width="1.2"/></svg>
<svg class="a" style="left:1713px;top:986px" width="22" height="22" viewBox="0 0 22 22"><path d="M2 6l4-4h14v14l-4 4H2z" fill="#5e8ec4" stroke="#eeeeee" stroke-width="1.3"/><path d="M2 6h14v14M16 6l4-4" stroke="#eeeeee" stroke-width="1.2" fill="none"/><path d="M4 9l10 9M4 13l7 6M7 8l7 7" stroke="#eeeeee" stroke-width="0.7"/></svg>
<svg class="a" style="left:1746px;top:987px" width="23" height="20" viewBox="0 0 23 20"><path d="M6 2h16l-5 7H1z" fill="#eeeeee"/><path d="M6 11h16l-5 7H1z" fill="#eeeeee"/><path d="M10 13c0-4 4-6 5-3" stroke="#5e8ec4" stroke-width="1.6" fill="none"/></svg>
<svg class="a" style="left:1775px;top:984px" width="26" height="26" viewBox="0 0 26 26"><path d="M3 2h15l5 5v10H3z" fill="#4a7ab8"/><path d="M8 1v14M1 8h14" stroke="#eeeeee" stroke-width="1.2"/><path d="M1 16h10v6H1z" fill="#f0c040"/><path d="M11 20l4 4 9-9" stroke="#40c060" stroke-width="2.5" fill="none"/></svg>
<svg class="a" style="left:1808px;top:985px" width="25" height="24" viewBox="0 0 25 24"><path d="M1 2h19v16H1z" fill="#d8d8d8"/><path d="M3 14c3-10 6-10 8-2s5 8 7-2" stroke="#888" stroke-width="1.2" fill="none"/><path d="M17 11l-6 12h12z" fill="#f09a50"/><circle cx="8" cy="6" r="1.5" fill="#58acf0"/></svg>
<svg class="a" style="left:1849px;top:987px" width="21" height="20" viewBox="0 0 21 20"><path d="M1 2h19v16H1z" fill="none" stroke="#d8d8d8" stroke-width="1.3"/><path d="M12 6l5-1-1 5M17 5l-5 5M9 14l-5 1 1-5M4 15l5-5" stroke="#d8d8d8" stroke-width="1.2" fill="none"/></svg>
<svg class="a" style="left:1878px;top:988px" width="22" height="18" viewBox="0 0 22 18"><path d="M1 2h20M1 9h20M1 16h20" stroke="#e6e6e6" stroke-width="2.8"/></svg>
</body></html>
